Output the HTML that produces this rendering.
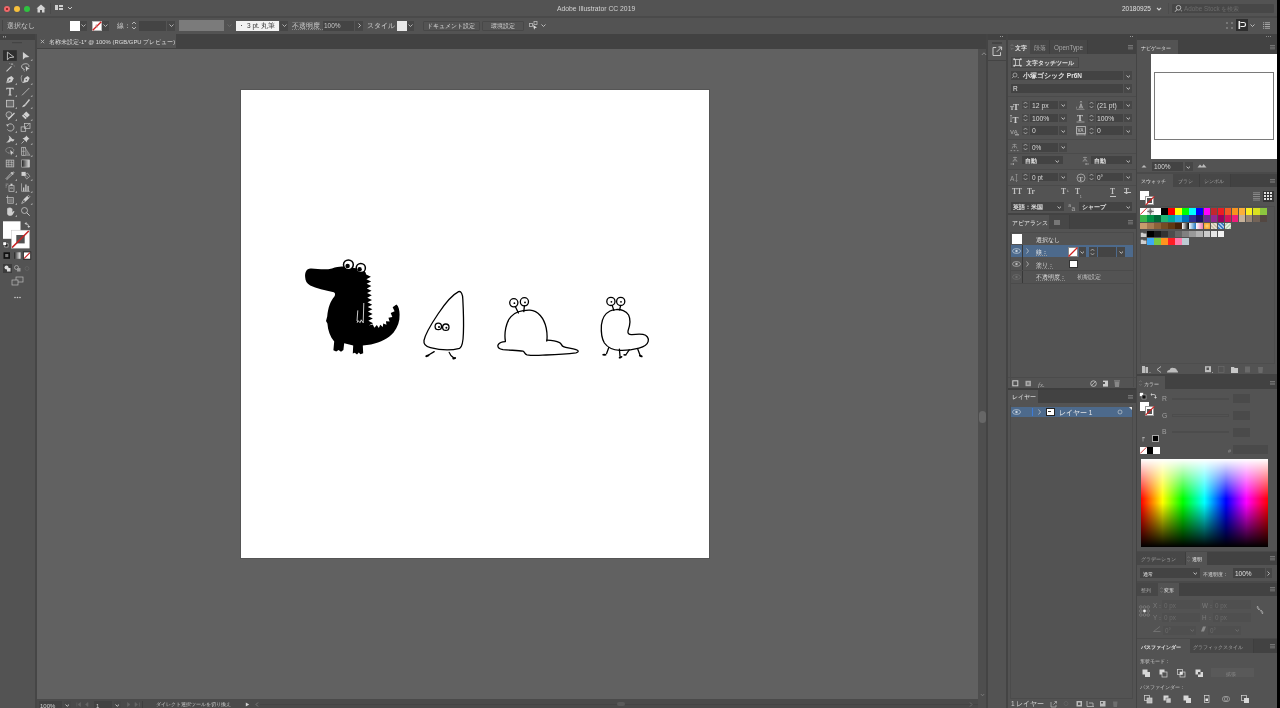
<!DOCTYPE html>
<html><head><meta charset="utf-8">
<style>
*{margin:0;padding:0;box-sizing:border-box}
html,body{width:1280px;height:708px;overflow:hidden;background:#535353;font-family:"Liberation Sans",sans-serif;color:#d6d6d6}
.a{position:absolute}
.t{position:absolute;font-size:6px;line-height:8px;white-space:nowrap;color:#d8d8d8;-webkit-font-smoothing:antialiased;will-change:transform}
</style></head><body>
<!-- title bar -->
<div class="a" style="left:0;top:0;width:1280px;height:17px;background:#535353"></div>
<div class="a" style="left:0;top:16px;width:1280px;height:2px;background:#4a4a4a"></div>
<!-- control bar -->
<div class="a" style="left:0;top:18px;width:1280px;height:16px;background:#535353"></div>
<!-- left toolbar -->
<div class="a" style="left:0;top:34px;width:36px;height:674px;background:#535353"></div>
<div class="a" style="left:0;top:34px;width:36px;height:6px;background:#424242"></div>
<div class="a" style="left:35px;top:34px;width:2px;height:674px;background:#464646"></div>
<!-- tab bar -->
<div class="a" style="left:37px;top:34px;width:950px;height:15px;background:#424242"></div>
<div class="a" style="left:37px;top:34px;width:139px;height:14px;background:#535353"></div>
<!-- canvas -->
<div class="a" style="left:37px;top:49px;width:941px;height:650px;background:#616161"></div>
<!-- artboard -->
<div class="a" style="left:241px;top:90px;width:468px;height:468px;background:#fff;box-shadow:0 0 0 1px rgba(0,0,0,0.12)"></div>
<!-- ART --><svg class="a" style="left:0;top:0" width="980" height="708" viewBox="0 0 980 708">
<g fill="#000">
<path d="M305.2 277.5 C304.6 272 306.4 268.8 310.6 268.4 C316.8 268.2 324 270.6 332 268.4 C337 267 341 266.2 344 266.8 L360 268.8 C363.6 269.4 365.6 271.4 366.2 274.5 L366.2 274.5 L370.91 276.82 L366.42 279.14 L371.13 281.45 L366.64 283.77 L371.35 286.09 L366.85 288.41 L371.56 290.73 L367.07 293.05 L371.78 295.36 L367.29 297.68 L372.0 300.0 L367.51 302.32 L372.22 304.64 L367.73 306.95 L372.44 309.27 L367.95 311.59 L372.65 313.91 L368.16 316.23 L372.87 318.55 L368.38 320.86 L373.09 323.18 L368.6 325.5 L372.77 324.39 L374.4 327.8 L376.78 325.01 L378.87 327.93 L380.2 324.66 L382.89 326.91 L383.18 323.4 L386.48 324.73 L385.92 321.14 L389.62 321.38 L388.45 317.73 L392.32 316.88 L390.72 313.08 L394.58 311.22 L392.65 307.18 L396.4 304.4 C398.6 306 399.6 310 399.6 314.6 C399.8 321.4 397.8 327.4 393.6 332.4 C388.8 338.2 380.8 342.2 371 344.4 L362.8 345.4 L363.2 353.2 L360.4 354.2 L358.8 352.4 L357 354.4 L354.8 352.8 L352.8 353.6 L353.2 345.6 L344.2 343.2 L343.4 350 L341 351.8 L338.6 350 L336.2 351.4 L333.4 350.2 L334.2 341.6 C330.2 336.6 327.8 330.2 327.4 323.4 L326 321 L327.2 316.6 C328 307.4 330.6 300.6 334.4 296.4 C335.4 294.6 335.4 293 333.8 292.2 C325 290.4 316.2 288 310.2 285.4 C306.6 283.6 305.4 280.8 305.2 277.5 Z"/>
</g>
<circle cx="348.4" cy="264.8" r="4.9" fill="#fff" stroke="#000" stroke-width="1.5"/>
<circle cx="347.6" cy="266" r="2.2" fill="#000"/>
<circle cx="360.8" cy="268" r="4.6" fill="#fff" stroke="#000" stroke-width="1.5"/>
<circle cx="359.6" cy="269.2" r="2.2" fill="#000"/>
<path d="M363.8 303 L363.2 322.8 L361.2 319.8 L360.2 322.6 L357.8 320.6 L357.2 322.8 M357.8 310.4 L357 321" stroke="#fff" stroke-width="0.8" fill="none"/>
<g fill="none" stroke="#000" stroke-width="1.3" stroke-linecap="round" stroke-linejoin="round">
<!-- triangle -->
<path d="M458.6 291.6 C461.2 291 462.6 294 462.8 299 C463.4 310 463.8 322 463.4 333 C463.2 341 462.4 347 459.6 348.4 C452 350.4 440 350.2 430.4 347.6 C426.2 346.6 423.4 344.2 424 340.4 C425.6 333 430.6 325 438 314 C444.6 304 452.2 294.8 458.6 291.6 Z"/>
<circle cx="438.3" cy="326.4" r="3.2"/><circle cx="445.8" cy="327.2" r="3.2"/>
<path d="M434.2 351.6 L428.6 355"/><path d="M449.2 352.4 C450 354.6 451.6 356.6 453.4 357.6"/>
<!-- slug -->
<circle cx="513.8" cy="302.8" r="4.1"/><circle cx="524.4" cy="301.8" r="4.1"/>
<path d="M515.4 306.8 L518.4 313"/><path d="M524.4 305.8 L523.8 311.6"/>
<path d="M505.4 341.2 C504 333 506 322 511 316.6 C515.4 311.8 522 310 530 310.2 C538 310.6 544 318 546.2 328 C547.2 333 547.2 338 546.8 341"/>
<path d="M505.4 341.6 C502 341.6 499.4 342.4 498 345 C497.4 347.4 499 349 503 349.6 C510 350.4 518 350.2 523 351.2 C525 352 524.4 354.2 527 354.8 C533 355.8 540 355.2 546 355 C556 354.6 568 353.8 576 352.8 C579 352.2 579 350.4 576 349.6 C571 348.2 566 347.8 563.4 346.6 C561 345.6 562 343.8 559.6 342.6 C556 341 551 340.4 546.8 340.2"/>
<!-- caterpillar -->
<circle cx="610.9" cy="301.4" r="4.1"/><circle cx="620.7" cy="301.4" r="4.1"/>
<path d="M612.2 305.4 L613.8 310.4"/><path d="M620.6 305.6 L619.6 309.8"/>
<path d="M615.8 309.6 C621 309 626.4 311 628.6 315 C630.8 319.4 630.2 325 628 331 C627.6 333.6 628.8 334.8 632 334.6 C636 334.2 640 334 643 334.4 C647 335.2 649 338.2 648.2 341.4 C647.4 344.6 644 346.8 639 348.2 C632 350 626 350.6 620 350.4 C613 350 607.6 347.6 604.4 343 C601.4 338 601 331 601.4 325 C602.2 318 606 313 610 311 C611.6 310.2 613.6 309.8 615.8 309.6 Z"/>
<path d="M608.8 347.6 L606.6 353.4"/><path d="M619.4 349.2 L620 356"/><path d="M629.2 349.8 L626.4 354"/><path d="M637.8 349.2 L640 355"/>
</g>
<g fill="#000">
<circle cx="439" cy="327" r="1"/><circle cx="446.4" cy="327.8" r="1"/>
<circle cx="514.4" cy="303.2" r="0.9"/><circle cx="525" cy="302.4" r="0.9"/>
<circle cx="611.4" cy="301.8" r="0.9"/><circle cx="621" cy="301.8" r="0.9"/>
<ellipse cx="427.4" cy="355.8" rx="2.2" ry="1.1" transform="rotate(-20 427.4 355.8)"/>
<ellipse cx="454.2" cy="358.2" rx="2" ry="1.1" transform="rotate(-15 454.2 358.2)"/>
<ellipse cx="604.4" cy="354.8" rx="2.2" ry="1" /><ellipse cx="620.6" cy="357.2" rx="2" ry="1" transform="rotate(-20 620.6 357.2)"/>
<ellipse cx="625" cy="354.8" rx="1.8" ry="0.9"/><ellipse cx="640.8" cy="356" rx="2" ry="1" transform="rotate(20 640.8 356)"/>
</g>
</svg>
<!-- /ART -->
<!-- v scrollbar -->
<div class="a" style="left:978px;top:49px;width:8px;height:659px;background:#4e4e4e"></div>
<div class="a" style="left:986px;top:34px;width:2px;height:674px;background:#444444"></div>
<!-- status bar -->
<div class="a" style="left:37px;top:699px;width:941px;height:9px;background:#4a4a4a"></div>
<!-- dock -->
<div class="a" style="left:988px;top:34px;width:18px;height:674px;background:#535353"></div>
<div class="a" style="left:988px;top:34px;width:18px;height:6px;background:#424242"></div>
<div class="a" style="left:1006px;top:34px;width:2px;height:674px;background:#444444"></div>
<!-- col1 -->
<div class="a" style="left:1008px;top:34px;width:128px;height:674px;background:#535353"></div>
<div class="a" style="left:1008px;top:34px;width:128px;height:6px;background:#424242"></div>
<div class="a" style="left:1136px;top:34px;width:1px;height:674px;background:#444444"></div>
<!-- col2 -->
<div class="a" style="left:1137px;top:34px;width:140px;height:674px;background:#535353"></div>
<div class="a" style="left:1137px;top:34px;width:140px;height:6px;background:#424242"></div>
<div class="a" style="left:1277px;top:0;width:3px;height:708px;background:#000"></div>

<!-- TITLE DETAILS -->
<div class="a" style="left:4px;top:6px;width:6px;height:6px;border-radius:50%;background:#f0686a"></div>
<div class="a" style="left:6px;top:8px;width:2px;height:2px;border-radius:50%;background:#8a1010"></div>
<div class="a" style="left:14px;top:6px;width:6px;height:6px;border-radius:50%;background:#f6c03c"></div>
<div class="a" style="left:24px;top:6px;width:6px;height:6px;border-radius:50%;background:#2fc340"></div>
<svg class="a" style="left:36px;top:4px" width="10" height="9" viewBox="0 0 10 9"><path d="M5 0.5 L9.5 4.5 L8.5 4.5 L8.5 8.5 L6 8.5 L6 6 L4 6 L4 8.5 L1.5 8.5 L1.5 4.5 L0.5 4.5 Z" fill="#d4d4d4"/></svg>
<div class="a" style="left:50px;top:3px;width:1px;height:11px;background:#4a4a4a"></div>
<div class="a" style="left:55px;top:5px;width:3px;height:5px;background:#d0d0d0"></div>
<div class="a" style="left:59px;top:5px;width:4px;height:2px;background:#d0d0d0"></div>
<div class="a" style="left:59px;top:8px;width:4px;height:2px;background:#d0d0d0"></div>
<svg class="a" style="left:67px;top:6px" width="6" height="4" viewBox="0 0 6 4"><path d="M1 1 L3 3 L5 1" stroke="#c8c8c8" stroke-width="1" fill="none"/></svg>
<div class="t" style="left:557px;top:4px;font-size:6.8px;line-height:9px;color:#d2d2d2">Adobe Illustrator CC 2019</div>
<div class="t" style="left:1122px;top:4px;font-size:6.5px;line-height:9px;color:#e0e0e0">20180925</div>
<svg class="a" style="left:1156px;top:7px" width="6" height="4" viewBox="0 0 6 4"><path d="M1 1 L3 3 L5 1" stroke="#d0d0d0" stroke-width="1.1" fill="none"/></svg>
<div class="a" style="left:1168px;top:3px;width:1px;height:11px;background:#4c4c4c"></div>
<div class="a" style="left:1172px;top:4px;width:102px;height:9px;background:#474747;border-radius:1px"></div>
<svg class="a" style="left:1174px;top:4px" width="9" height="9" viewBox="0 0 9 9"><circle cx="4.5" cy="3.8" r="2.3" stroke="#c0c0c0" stroke-width="0.9" fill="none"/><path d="M3 5.5 L1 7.8" stroke="#c0c0c0" stroke-width="1"/><path d="M6.5 6.5 L8.3 6.5 L7.4 7.6Z" fill="#c0c0c0"/></svg>
<div class="t" style="left:1184px;top:4px;font-size:6.3px;line-height:9px;color:#6c6c6c">Adobe Stock を検索</div>
<!-- CONTROL BAR DETAILS -->
<div class="a" style="left:2px;top:20px;width:1px;height:11px;background:#464646"></div>
<div class="t" style="left:7px;top:22px;font-size:6.5px;color:#cfcfcf">選択なし</div>
<div class="a" style="left:70px;top:20.5px;width:10px;height:10px;background:#fff"></div>
<div class="a" style="left:80px;top:20.5px;width:7px;height:10px;background:#474747"></div>
<svg class="a" style="left:81px;top:24px" width="5" height="3" viewBox="0 0 5 3"><path d="M0.5 0.5 L2.5 2.5 L4.5 0.5" stroke="#bdbdbd" stroke-width="0.9" fill="none"/></svg>
<div class="a" style="left:92px;top:20.5px;width:10px;height:10px;background:#fff;border:1px solid #bbb"></div>
<svg class="a" style="left:92px;top:20.5px" width="10" height="10" viewBox="0 0 10 10"><path d="M9.3 0.7 L0.7 9.3" stroke="#d02020" stroke-width="1.3"/><path d="M3 4 L6 6 M4.5 3 L5 7" stroke="#b88" stroke-width="0.5"/></svg>
<div class="a" style="left:102px;top:20.5px;width:7px;height:10px;background:#474747"></div>
<svg class="a" style="left:103px;top:24px" width="5" height="3" viewBox="0 0 5 3"><path d="M0.5 0.5 L2.5 2.5 L4.5 0.5" stroke="#bdbdbd" stroke-width="0.9" fill="none"/></svg>
<div class="t" style="left:117px;top:22px;font-size:6.5px;color:#cfcfcf">線：</div>
<svg class="a" style="left:131px;top:21px" width="6" height="9" viewBox="0 0 6 9"><path d="M1 3 L3 1 L5 3 M1 6 L3 8 L5 6" stroke="#c0c0c0" stroke-width="0.9" fill="none"/></svg>
<div class="a" style="left:139px;top:20.5px;width:27px;height:10px;background:#444"></div>
<div class="a" style="left:167px;top:20.5px;width:8px;height:10px;background:#474747"></div>
<svg class="a" style="left:168.5px;top:24px" width="5" height="3" viewBox="0 0 5 3"><path d="M0.5 0.5 L2.5 2.5 L4.5 0.5" stroke="#bdbdbd" stroke-width="0.9" fill="none"/></svg>
<div class="a" style="left:178.5px;top:20px;width:45px;height:10.5px;background:#7b7b7b"></div>
<svg class="a" style="left:226.5px;top:24px" width="5" height="3" viewBox="0 0 5 3"><path d="M0.5 0.5 L2.5 2.5 L4.5 0.5" stroke="#6e6e6e" stroke-width="0.9" fill="none"/></svg>
<div class="a" style="left:236px;top:20.5px;width:43px;height:10px;background:#f2f2f2"></div>
<div class="a" style="left:241px;top:25px;width:1.2px;height:1.2px;background:#222;border-radius:50%"></div>
<div class="t" style="left:247px;top:22px;font-size:6.5px;color:#333">3 pt. 丸筆</div>
<div class="a" style="left:280px;top:20.5px;width:8px;height:10px;background:#474747"></div>
<svg class="a" style="left:281.5px;top:24px" width="5" height="3" viewBox="0 0 5 3"><path d="M0.5 0.5 L2.5 2.5 L4.5 0.5" stroke="#bdbdbd" stroke-width="0.9" fill="none"/></svg>
<div class="t" style="left:292px;top:22px;font-size:6.5px;color:#cfcfcf;text-decoration:underline dotted #888">不透明度：</div>
<div class="a" style="left:323px;top:20.5px;width:31px;height:10px;background:#444"></div>
<div class="t" style="left:324px;top:22px;font-size:6.5px;color:#c8c8c8">100%</div>
<div class="a" style="left:355px;top:20.5px;width:8px;height:10px;background:#474747"></div>
<svg class="a" style="left:357.5px;top:23px" width="3" height="5" viewBox="0 0 3 5"><path d="M0.5 0.5 L2.5 2.5 L0.5 4.5" stroke="#c8c8c8" stroke-width="0.9" fill="none"/></svg>
<div class="t" style="left:367px;top:22px;font-size:6.5px;color:#cfcfcf">スタイル：</div>
<div class="a" style="left:397px;top:20.5px;width:10px;height:10px;background:#e8e8e8"></div>
<div class="a" style="left:407px;top:20.5px;width:7px;height:10px;background:#474747"></div>
<svg class="a" style="left:408px;top:24px" width="5" height="3" viewBox="0 0 5 3"><path d="M0.5 0.5 L2.5 2.5 L4.5 0.5" stroke="#bdbdbd" stroke-width="0.9" fill="none"/></svg>
<div class="a" style="left:422.5px;top:20.5px;width:57px;height:10px;border:1px solid #484848;border-radius:1px"></div>
<div class="t" style="left:427px;top:22px;font-size:6.3px;color:#d8d8d8">ドキュメント設定</div>
<div class="a" style="left:482px;top:20.5px;width:41.5px;height:10px;border:1px solid #484848;border-radius:1px"></div>
<div class="t" style="left:491px;top:22px;font-size:6.3px;color:#d8d8d8">環境設定</div>
<svg class="a" style="left:529px;top:21px" width="9" height="9" viewBox="0 0 9 9"><rect x="0.5" y="2.5" width="3" height="3" stroke="#bbb" stroke-width="0.8" fill="none"/><rect x="5" y="0.5" width="3" height="3" stroke="#bbb" stroke-width="0.8" fill="none"/><path d="M4 4 L8 6.5 L6 7 L5.2 8.8Z" fill="#ddd"/></svg>
<svg class="a" style="left:540.5px;top:24px" width="5" height="3" viewBox="0 0 5 3"><path d="M0.5 0.5 L2.5 2.5 L4.5 0.5" stroke="#c8c8c8" stroke-width="0.9" fill="none"/></svg>
<svg class="a" style="left:1226px;top:22px" width="7" height="7" viewBox="0 0 7 7"><g fill="#777"><rect x="0" y="0" width="2" height="2"/><rect x="5" y="0" width="2" height="2"/><rect x="0" y="5" width="2" height="2"/><rect x="5" y="5" width="2" height="2"/></g></svg>
<div class="a" style="left:1236px;top:19px;width:12px;height:12px;background:#2e2e2e"></div>
<svg class="a" style="left:1237px;top:20px" width="10" height="10" viewBox="0 0 10 10"><rect x="1.5" y="1" width="1.6" height="8" fill="#eee"/><path d="M3.5 2.5 L7 2.5 Q8.5 2.5 8.5 4.5 Q8.5 6.5 7 6.5 L3.5 6.5" stroke="#eee" stroke-width="1.2" fill="none"/></svg>
<svg class="a" style="left:1250px;top:24px" width="5" height="3" viewBox="0 0 5 3"><path d="M0.5 0.5 L2.5 2.5 L4.5 0.5" stroke="#c8c8c8" stroke-width="0.9" fill="none"/></svg>
<svg class="a" style="left:1263px;top:22px" width="7" height="7" viewBox="0 0 7 7"><g fill="#b8b8b8"><rect x="0" y="0.4" width="1.2" height="0.8"/><rect x="0" y="2.2" width="1.2" height="0.8"/><rect x="0" y="4" width="1.2" height="0.8"/><rect x="0" y="5.8" width="1.2" height="0.8"/><rect x="2" y="0.4" width="5" height="0.8"/><rect x="2" y="2.2" width="5" height="0.8"/><rect x="2" y="4" width="5" height="0.8"/><rect x="2" y="5.8" width="5" height="0.8"/></g></svg>
<!-- TOOLBAR --><svg class="a" style="left:0;top:0" width="36" height="310" viewBox="0 0 36 310">
<rect x="3" y="36" width="1" height="1.5" fill="#999"/><rect x="5" y="36" width="1" height="1.5" fill="#999"/>
<rect x="12" y="42" width="10" height="1.2" fill="#444"/>
<rect x="3" y="50.2" width="13.8" height="10.7" fill="#2f2f2f"/>
<g transform="translate(5,50.5)"><path d="M2.4 1.6 L2.4 9.3 L4.7 7.1 L8.9 6.6 Z" fill="none" stroke="#c9c9c9" stroke-width="0.9"/></g>
<g transform="translate(20.5,50.5)"><path d="M2.4 1.6 L2.4 9.3 L4.7 7.1 L8.9 6.6 Z" fill="#d0d0d0"/></g>
<path d="M32.4 58.9 L32.4 60.7 L30.599999999999998 60.7 Z" fill="#bdbdbd"/>
<g transform="translate(5,62.5)"><path d="M1.5 8.8 L6.5 3.8" stroke="#c9c9c9" stroke-width="1.1"/><path d="M7 1 L7 2.4 M5.8 1.6 L8.2 1.6 M8.8 3 L9.6 3.6 M4.5 0.8 L5 1.4" stroke="#c9c9c9" stroke-width="0.6"/></g>
<g transform="translate(20.5,62.5)"><path d="M4 7 Q0.5 6 1 3.5 Q2 1 5.5 1.2 Q9 1.6 8.4 4.4" fill="none" stroke="#c9c9c9" stroke-width="0.8"/><path d="M5 3.5 L9.2 6.5 L7 6.8 L5.8 9 Z" fill="#d0d0d0"/><path d="M3.5 6.5 Q3 8 4 9" stroke="#c9c9c9" stroke-width="0.6" fill="none"/></g>
<g transform="translate(5,74.5)"><path d="M6.5 1.5 L8.8 3.8 L6.8 7.5 L1.2 8.8 L2.6 3.4 Z" fill="#cfcfcf"/><path d="M1.5 8.5 L4.5 5.5" stroke="#535353" stroke-width="0.6"/><circle cx="4.8" cy="5.2" r="0.8" fill="#535353"/></g>
<path d="M17.0 82.9 L17.0 84.7 L15.200000000000001 84.7 Z" fill="#bdbdbd"/>
<g transform="translate(20.5,74.5)"><path d="M7 1.5 L9.2 3.6 L7.4 7.2 L2.6 8.6 L3.8 3.8 Z" fill="#cfcfcf"/><path d="M1.6 0.6 Q0 3 1 6 Q1.8 9 3.4 8" stroke="#c9c9c9" stroke-width="0.6" fill="none"/><circle cx="5.8" cy="5.2" r="0.8" fill="#535353"/></g>
<path d="M32.4 82.9 L32.4 84.7 L30.599999999999998 84.7 Z" fill="#bdbdbd"/>
<g transform="translate(5,86.5)"><path d="M1.3 1.3 L8.7 1.3 L8.7 3 L8 3 L7.6 2.2 L5.7 2.2 L5.7 8 L6.5 8.3 L6.5 8.9 L3.5 8.9 L3.5 8.3 L4.3 8 L4.3 2.2 L2.4 2.2 L2 3 L1.3 3 Z" fill="#d2d2d2"/></g>
<path d="M17.0 94.9 L17.0 96.7 L15.200000000000001 96.7 Z" fill="#bdbdbd"/>
<g transform="translate(20.5,86.5)"><path d="M1.5 8.8 L8.8 1.5" stroke="#c9c9c9" stroke-width="0.8"/></g>
<path d="M32.4 94.9 L32.4 96.7 L30.599999999999998 96.7 Z" fill="#bdbdbd"/>
<g transform="translate(5,98.5)"><rect x="1.5" y="1.8" width="7.2" height="6.6" fill="#6a6a6a" stroke="#c9c9c9" stroke-width="0.8"/></g>
<path d="M17.0 106.9 L17.0 108.7 L15.200000000000001 108.7 Z" fill="#bdbdbd"/>
<g transform="translate(20.5,98.5)"><path d="M9 1 L5 6" stroke="#c9c9c9" stroke-width="1.4"/><path d="M4.6 5.4 Q2.4 6 1.5 8.8 Q4.6 8.6 5.6 6.6 Z" fill="#d0d0d0"/></g>
<path d="M32.4 106.9 L32.4 108.7 L30.599999999999998 108.7 Z" fill="#bdbdbd"/>
<g transform="translate(5,110.5)"><circle cx="4" cy="4.2" r="3" fill="#5d5d5d" stroke="#c9c9c9" stroke-width="0.7"/><path d="M3 9 L9.5 2.5" stroke="#d0d0d0" stroke-width="1.3"/></g>
<path d="M17.0 118.9 L17.0 120.7 L15.200000000000001 120.7 Z" fill="#bdbdbd"/>
<g transform="translate(20.5,110.5)"><path d="M5.8 1 L9.3 4.4 L5 8.8 L1.4 5.3 Z" fill="#d0d0d0"/><path d="M2.8 3.9 L6.6 7.4" stroke="#535353" stroke-width="0.6"/></g>
<path d="M32.4 118.9 L32.4 120.7 L30.599999999999998 120.7 Z" fill="#bdbdbd"/>
<g transform="translate(5,122.5)"><path d="M2.2 3.2 A3.6 3.6 0 1 1 2.4 7" fill="none" stroke="#c9c9c9" stroke-width="0.8"/><path d="M1 2 L3.2 2 L3.2 4.4 Z" fill="#d0d0d0"/></g>
<path d="M17.0 130.9 L17.0 132.7 L15.200000000000001 132.7 Z" fill="#bdbdbd"/>
<g transform="translate(20.5,122.5)"><rect x="4" y="1" width="5.5" height="5" fill="none" stroke="#c9c9c9" stroke-width="0.7"/><rect x="0.6" y="4.4" width="4.6" height="4.4" fill="none" stroke="#c9c9c9" stroke-width="0.7"/><path d="M6 4 L8.6 1.6" stroke="#c9c9c9" stroke-width="0.6"/></g>
<path d="M32.4 130.9 L32.4 132.7 L30.599999999999998 132.7 Z" fill="#bdbdbd"/>
<g transform="translate(5,134.5)"><path d="M1 8 Q3 7 4 5 Q5 2 3 1.2 Q5 1 6 3 Q7 5 9.5 5 Q8.5 8 6 6.6 Q4.5 8.5 1 8 Z" fill="#c8c8c8"/></g>
<path d="M17.0 142.9 L17.0 144.7 L15.200000000000001 144.7 Z" fill="#bdbdbd"/>
<g transform="translate(20.5,134.5)"><path d="M5.6 1 L9 4.4 L7.8 4.8 L6.4 6.6 L6.6 8 L2 3.4 L3.4 3.6 L5.2 2.2 Z" fill="#d0d0d0"/><path d="M3.8 6.2 L1 9" stroke="#c9c9c9" stroke-width="0.8"/></g>
<path d="M32.4 142.9 L32.4 144.7 L30.599999999999998 144.7 Z" fill="#bdbdbd"/>
<g transform="translate(5,146.5)"><ellipse cx="4.8" cy="3.8" rx="4" ry="2.8" fill="none" stroke="#c9c9c9" stroke-width="0.6" stroke-dasharray="1 0.5"/><path d="M5.2 3.4 L9 6.8 L7 7 L6 9 Z" fill="#d0d0d0"/></g>
<path d="M17.0 154.9 L17.0 156.7 L15.200000000000001 156.7 Z" fill="#bdbdbd"/>
<g transform="translate(20.5,146.5)"><rect x="1.2" y="0.8" width="3.6" height="8" fill="none" stroke="#c9c9c9" stroke-width="0.7"/><path d="M1.2 4.8 L4.8 4.8 M3 0.8 L3 8.8" stroke="#c9c9c9" stroke-width="0.5"/><path d="M4.8 1.5 L9.6 8.8 L4.8 8.8" fill="#777" stroke="#c9c9c9" stroke-width="0.4"/></g>
<path d="M32.4 154.9 L32.4 156.7 L30.599999999999998 156.7 Z" fill="#bdbdbd"/>
<g transform="translate(5,158.5)"><rect x="1.2" y="1.6" width="7.6" height="6.8" fill="#5e5e5e" stroke="#c9c9c9" stroke-width="0.7"/><path d="M1.2 4 Q4 3 8.8 4.4 M1.2 6.2 Q5 5.4 8.8 6.6 M3.8 1.6 Q3.2 5 4 8.4 M6.4 1.6 Q7 5 6.2 8.4" stroke="#c9c9c9" stroke-width="0.5" fill="none"/></g>
<g transform="translate(20.5,158.5)"><defs><linearGradient id="gg" x1="0" x2="1"><stop offset="0" stop-color="#222"/><stop offset="1" stop-color="#e0e0e0"/></linearGradient></defs><rect x="1.2" y="1.4" width="7.8" height="7.2" fill="url(#gg)" stroke="#c9c9c9" stroke-width="0.6"/></g>
<g transform="translate(5,170.5)"><path d="M8.6 1.4 L9 1.8 L7 4.2 L1.8 9 L1 8.2 L5.8 3 Z" fill="none" stroke="#c9c9c9" stroke-width="0.8"/><path d="M6 1.8 L8.2 4" stroke="#c9c9c9" stroke-width="1.2"/></g>
<path d="M17.0 178.9 L17.0 180.7 L15.200000000000001 180.7 Z" fill="#bdbdbd"/>
<g transform="translate(20.5,170.5)"><rect x="1" y="1.4" width="4.2" height="4" fill="#d0d0d0"/><path d="M3.8 4.8 L7 2.6 L9.4 5.8 L6.2 8.6 Z" fill="none" stroke="#c9c9c9" stroke-width="0.6"/><path d="M4.5 4 L7.8 7" stroke="#c9c9c9" stroke-width="0.5"/></g>
<path d="M32.4 178.9 L32.4 180.7 L30.599999999999998 180.7 Z" fill="#bdbdbd"/>
<g transform="translate(5,182.5)"><rect x="4" y="3.2" width="5" height="5.6" fill="none" stroke="#c9c9c9" stroke-width="0.7"/><rect x="5.5" y="1.2" width="2" height="2" fill="#d0d0d0"/><path d="M5.2 5.6 Q6.5 4.6 7.8 5.6 Q6.5 6.8 5.2 5.6" fill="none" stroke="#c9c9c9" stroke-width="0.5"/><path d="M0.6 1.6 L3.4 1.6 M0.6 3.2 L2 3.2 M0.6 4.6 L1.6 4.6" stroke="#c9c9c9" stroke-width="0.5"/></g>
<path d="M17.0 190.9 L17.0 192.7 L15.200000000000001 192.7 Z" fill="#bdbdbd"/>
<g transform="translate(20.5,182.5)"><path d="M1 0.8 L1 8.8 L9.4 8.8" fill="none" stroke="#c9c9c9" stroke-width="0.6"/><rect x="2.6" y="5" width="1.2" height="3.8" fill="#d0d0d0"/><rect x="4.8" y="2" width="1.2" height="6.8" fill="#d0d0d0"/><rect x="7" y="3.4" width="1.2" height="5.4" fill="#d0d0d0"/></g>
<path d="M32.4 190.9 L32.4 192.7 L30.599999999999998 192.7 Z" fill="#bdbdbd"/>
<g transform="translate(5,194.5)"><path d="M1 3 L8.4 3 L8.4 8.8 L2.6 8.8 L2.6 1" fill="none" stroke="#c9c9c9" stroke-width="0.7"/><rect x="3.2" y="4" width="4.6" height="4.2" fill="#7a7a7a"/></g>
<path d="M17.0 202.9 L17.0 204.7 L15.200000000000001 204.7 Z" fill="#bdbdbd"/>
<g transform="translate(20.5,194.5)"><path d="M8 0.8 L9.4 2.2 L4 7.6 L1.2 9 L2.4 6.2 Z" fill="none" stroke="#c9c9c9" stroke-width="0.7"/><path d="M6.6 1.6 L8.6 3.6 L5 7 L3 5 Z" fill="#cfcfcf"/></g>
<path d="M32.4 202.9 L32.4 204.7 L30.599999999999998 204.7 Z" fill="#bdbdbd"/>
<g transform="translate(5,206.5)"><path d="M2.2 4 L2.2 2 Q2.6 1.2 3.2 2 L3.4 1.2 Q4 0.6 4.6 1.2 L5 1 Q5.6 0.8 6 1.4 L6.4 1.8 Q7.2 1.8 7.4 2.6 L7.4 6 L8.6 4.6 Q9.4 4.4 9.4 5.2 L7.4 8.4 Q6.8 9.2 5.8 9.2 L4 9.2 Q2.6 9 2.2 7.6 Z" fill="#cfcfcf"/></g>
<path d="M17.0 214.9 L17.0 216.7 L15.200000000000001 216.7 Z" fill="#bdbdbd"/>
<g transform="translate(20.5,206.5)"><circle cx="4" cy="4" r="3" fill="none" stroke="#c9c9c9" stroke-width="0.8"/><path d="M6.2 6.2 L9.2 9.2" stroke="#c9c9c9" stroke-width="1"/></g>
<rect x="3" y="221.3" width="17.5" height="17.5" fill="#fff"/>
<rect x="11.5" y="230.2" width="18" height="18" fill="#fff"/>
<rect x="16.3" y="235" width="8.4" height="8.4" fill="#535353"/>
<path d="M29 230.8 L12 247.6" stroke="#c82424" stroke-width="1.5"/>
<rect x="11.5" y="230.2" width="18" height="18" fill="none" stroke="#bcbcbc" stroke-width="0.5"/>
<path d="M25.5 223.5 Q28.8 223.5 28.8 227" fill="none" stroke="#cfcfcf" stroke-width="0.8"/><path d="M24.5 223.5 L26.5 222 L26.5 225Z M27.3 226 L30.3 226 L28.8 228Z" fill="#cfcfcf"/>
<rect x="4.8" y="243.8" width="3.2" height="3.2" fill="#111" stroke="#ddd" stroke-width="0.6"/><rect x="3" y="242" width="3.2" height="3.2" fill="#fff" stroke="#333" stroke-width="0.4"/>
<rect x="3.5" y="252.3" width="6.5" height="6.5" fill="#111"/><rect x="5.2" y="254" width="3.1" height="3.1" fill="#777"/>
<defs><linearGradient id="g2" x1="0" x2="1"><stop offset="0" stop-color="#222"/><stop offset="1" stop-color="#eee"/></linearGradient></defs><rect x="14" y="252.3" width="6.5" height="6.5" fill="url(#g2)"/>
<rect x="23.8" y="252.3" width="6.5" height="6.5" fill="#fff"/><path d="M30 252.6 L24 258.6" stroke="#c82424" stroke-width="1.2"/><rect x="23.3" y="251.8" width="7.5" height="7.5" fill="none" stroke="#2c2c2c" stroke-width="0.8"/>
<rect x="3" y="264" width="9" height="9" fill="#3c3c3c"/><circle cx="6.5" cy="267.5" r="2" fill="#ddd"/><rect x="7" y="268" width="3.5" height="3.5" fill="#ddd"/>
<circle cx="16.5" cy="267.5" r="2" fill="none" stroke="#bbb" stroke-width="0.7"/><rect x="17" y="268" width="3.5" height="3.5" fill="#999"/>
<circle cx="27" cy="268.5" r="2" fill="none" stroke="#6a6a6a" stroke-width="0.6"/>
<rect x="16" y="277" width="7" height="5" fill="#555" stroke="#bbb" stroke-width="0.7"/><rect x="12" y="280" width="6" height="5" fill="#555" stroke="#bbb" stroke-width="0.7"/>
<circle cx="15" cy="297.5" r="0.8" fill="#ccc"/><circle cx="17.5" cy="297.5" r="0.8" fill="#ccc"/><circle cx="20" cy="297.5" r="0.8" fill="#ccc"/>
</svg><!-- /TOOLBAR -->
<!-- PANELS1 --><div class="a" style="left:1000px;top:35.5px;width:1px;height:1.5px;background:#999;"></div>
<div class="a" style="left:1002px;top:35.5px;width:1px;height:1.5px;background:#999;"></div>
<div class="a" style="left:1130px;top:35.5px;width:1px;height:1.5px;background:#999;"></div>
<div class="a" style="left:1132px;top:35.5px;width:1px;height:1.5px;background:#999;"></div>
<div class="a" style="left:1266px;top:35.5px;width:1px;height:1.5px;background:#888;"></div>
<div class="a" style="left:1268px;top:35.5px;width:1px;height:1.5px;background:#888;"></div>
<div class="a" style="left:1270px;top:35.5px;width:1px;height:1.5px;background:#888;"></div>
<div class="a" style="left:988px;top:40px;width:18px;height:20px;background:#535353;"></div>
<div class="a" style="left:992px;top:42.3px;width:10px;height:1.4px;background:#444;"></div>
<div class="a" style="left:988px;top:60px;width:18px;height:1px;background:#444;"></div>
<svg class="a" style="left:992px;top:46px" width="11" height="11" viewBox="0 0 11 11"><path d="M4.2 1.5 L1 1.5 L1 9.5 L8.5 9.5 L8.5 6.2" stroke="#d4d4d4" stroke-width="0.9" fill="none"/><path d="M4.8 5.8 L9.6 1 M6.4 1 L9.6 1 L9.6 4.2" stroke="#d4d4d4" stroke-width="0.9" fill="none"/></svg>
<svg class="a" style="left:981px;top:52px" width="6" height="4" viewBox="0 0 6 4"><path d="M0.8 3 L3 0.8 L5.2 3" stroke="#999" stroke-width="0.8" fill="none"/></svg>
<div class="a" style="left:978.6px;top:410.5px;width:7px;height:12.3px;background:#676767;border-radius:3.5px"></div>
<svg class="a" style="left:980px;top:693px" width="5" height="4" viewBox="0 0 5 4"><path d="M0.8 1 L2.5 2.8 L4.2 1" stroke="#888" stroke-width="0.7" fill="none"/></svg>
<div class="a" style="left:1008px;top:40px;width:128px;height:14px;background:#424242;"></div>
<div class="a" style="left:1008px;top:40px;width:22px;height:14px;background:#535353;"></div>
<div class="a" style="left:1030px;top:40px;width:19px;height:14px;background:#474747;"></div>
<div class="a" style="left:1049px;top:40px;width:37.5px;height:14px;background:#474747;"></div>
<div class="a" style="left:1048.5px;top:40px;width:1px;height:14px;background:#3e3e3e;"></div>
<div class="a" style="left:1086.5px;top:40px;width:1px;height:14px;background:#3e3e3e;"></div>
<svg class="a" style="left:1010px;top:44px" width="4" height="6" viewBox="0 0 4 6"><path d="M0.6 2 L2 0.6 L3.4 2 M0.6 4 L2 5.4 L3.4 4" stroke="#8c8c8c" stroke-width="0.6" fill="none"/></svg>
<div class="t" style="left:1015px;top:43.6px;font-size:5.66px;color:#e8e8e8;font-weight:bold">文字</div>
<div class="t" style="left:1034px;top:43.6px;font-size:5.66px;color:#a8a8a8;">段落</div>
<div class="t" style="left:1054px;top:43.6px;font-size:6.3px;color:#a8a8a8;">OpenType</div>
<svg class="a" style="left:1127.5px;top:45.3px" width="5" height="4.5" viewBox="0 0 5 4.5"><rect x="0" y="0" width="5" height="0.9" fill="#7c7c7c"/><rect x="0" y="1.7" width="5" height="0.9" fill="#7c7c7c"/><rect x="0" y="3.4" width="5" height="0.9" fill="#7c7c7c"/></svg>
<div class="a" style="left:1010.5px;top:57px;width:68.5px;height:10.5px;background:#535353;border:1px solid #474747"></div>
<svg class="a" style="left:1013px;top:58px" width="9" height="9" viewBox="0 0 9 9"><path d="M1.5 1.5 L7.5 1.5 M1.5 7.5 L7.5 7.5 M2.5 1.5 L2.5 7.5 M6.5 1.5 L6.5 7.5" stroke="#d0d0d0" stroke-width="0.8"/><g fill="#d0d0d0"><circle cx="1.2" cy="1.2" r="1"/><circle cx="7.8" cy="1.2" r="1"/><circle cx="1.2" cy="7.8" r="1"/><circle cx="7.8" cy="7.8" r="1"/></g></svg>
<div class="t" style="left:1026px;top:58.6px;font-size:5.66px;color:#e0e0e0;font-weight:bold">文字タッチツール</div>
<div class="a" style="left:1010.5px;top:71px;width:112.5px;height:9px;background:#434343;"></div>
<div class="a" style="left:1123.5px;top:71px;width:8.5px;height:9px;background:#474747;"></div>
<svg class="a" style="left:1011px;top:72px" width="9" height="7" viewBox="0 0 9 7"><circle cx="4" cy="3" r="2" stroke="#bbb" stroke-width="0.7" fill="none"/><path d="M2.6 4.4 L1 6.2" stroke="#bbb" stroke-width="0.8"/><path d="M6.5 5.2 L8 5.2 L7.25 6.2Z" fill="#bbb"/></svg>
<div class="t" style="left:1023px;top:72.1px;font-size:6.5px;color:#e4e4e4;font-weight:bold">小塚ゴシック Pr6N</div>
<svg class="a" style="left:1125.9px;top:74.7px" width="4.5" height="3" viewBox="0 0 4.5 3"><path d="M0.5 0.6 L2.25 2.3 L4 0.6" stroke="#c4c4c4" stroke-width="1" fill="none"/></svg>
<div class="a" style="left:1010.5px;top:84px;width:112.5px;height:8.6px;background:#434343;"></div>
<div class="a" style="left:1123.5px;top:84px;width:8.5px;height:8.6px;background:#474747;"></div>
<div class="t" style="left:1013px;top:85.1px;font-size:6.5px;color:#e4e4e4;">R</div>
<svg class="a" style="left:1125.9px;top:87.2px" width="4.5" height="3" viewBox="0 0 4.5 3"><path d="M0.5 0.6 L2.25 2.3 L4 0.6" stroke="#c4c4c4" stroke-width="1" fill="none"/></svg>
<div class="a" style="left:1008px;top:95.5px;width:128px;height:1px;background:#4b4b4b;"></div>
<div class="a" style="left:1021.5px;top:100.7px;width:7.7px;height:8.7px;background:#4a4a4a;"></div>
<div class="a" style="left:1030.2px;top:100.7px;width:28px;height:8.7px;background:#434343;"></div>
<div class="a" style="left:1059px;top:100.7px;width:7.5px;height:8.7px;background:#474747;"></div>
<svg class="a" style="left:1023px;top:101.10000000000001px" width="5" height="8" viewBox="0 0 5 8"><path d="M0.8 2.8 L2.5 1 L4.2 2.8 M0.8 5.2 L2.5 7 L4.2 5.2" stroke="#bdbdbd" stroke-width="0.8" fill="none"/></svg>
<div class="t" style="left:1031.5px;top:101.7px;font-size:6.8px;color:#dadada;">12 px</div>
<svg class="a" style="left:1060.7px;top:103.9px" width="4.5" height="3" viewBox="0 0 4.5 3"><path d="M0.5 0.6 L2.25 2.3 L4 0.6" stroke="#c4c4c4" stroke-width="1" fill="none"/></svg>
<div class="a" style="left:1087.5px;top:100.7px;width:7.7px;height:8.7px;background:#4a4a4a;"></div>
<div class="a" style="left:1096px;top:100.7px;width:27.2px;height:8.7px;background:#434343;"></div>
<div class="a" style="left:1124px;top:100.7px;width:8px;height:8.7px;background:#474747;"></div>
<svg class="a" style="left:1089px;top:101.10000000000001px" width="5" height="8" viewBox="0 0 5 8"><path d="M0.8 2.8 L2.5 1 L4.2 2.8 M0.8 5.2 L2.5 7 L4.2 5.2" stroke="#bdbdbd" stroke-width="0.8" fill="none"/></svg>
<div class="t" style="left:1097px;top:101.7px;font-size:6.8px;color:#dadada;">(21 pt)</div>
<svg class="a" style="left:1125.9px;top:103.9px" width="4.5" height="3" viewBox="0 0 4.5 3"><path d="M0.5 0.6 L2.25 2.3 L4 0.6" stroke="#c4c4c4" stroke-width="1" fill="none"/></svg>
<div class="a" style="left:1021.5px;top:113.6px;width:7.7px;height:8.7px;background:#4a4a4a;"></div>
<div class="a" style="left:1030.2px;top:113.6px;width:28px;height:8.7px;background:#434343;"></div>
<div class="a" style="left:1059px;top:113.6px;width:7.5px;height:8.7px;background:#474747;"></div>
<svg class="a" style="left:1023px;top:114.0px" width="5" height="8" viewBox="0 0 5 8"><path d="M0.8 2.8 L2.5 1 L4.2 2.8 M0.8 5.2 L2.5 7 L4.2 5.2" stroke="#bdbdbd" stroke-width="0.8" fill="none"/></svg>
<div class="t" style="left:1031.5px;top:114.6px;font-size:6.8px;color:#dadada;">100%</div>
<svg class="a" style="left:1060.7px;top:116.8px" width="4.5" height="3" viewBox="0 0 4.5 3"><path d="M0.5 0.6 L2.25 2.3 L4 0.6" stroke="#c4c4c4" stroke-width="1" fill="none"/></svg>
<div class="a" style="left:1087.5px;top:113.6px;width:7.7px;height:8.7px;background:#4a4a4a;"></div>
<div class="a" style="left:1096px;top:113.6px;width:27.2px;height:8.7px;background:#434343;"></div>
<div class="a" style="left:1124px;top:113.6px;width:8px;height:8.7px;background:#474747;"></div>
<svg class="a" style="left:1089px;top:114.0px" width="5" height="8" viewBox="0 0 5 8"><path d="M0.8 2.8 L2.5 1 L4.2 2.8 M0.8 5.2 L2.5 7 L4.2 5.2" stroke="#bdbdbd" stroke-width="0.8" fill="none"/></svg>
<div class="t" style="left:1097px;top:114.6px;font-size:6.8px;color:#dadada;">100%</div>
<svg class="a" style="left:1125.9px;top:116.8px" width="4.5" height="3" viewBox="0 0 4.5 3"><path d="M0.5 0.6 L2.25 2.3 L4 0.6" stroke="#c4c4c4" stroke-width="1" fill="none"/></svg>
<div class="a" style="left:1021.5px;top:126.4px;width:7.7px;height:8.7px;background:#4a4a4a;"></div>
<div class="a" style="left:1030.2px;top:126.4px;width:28px;height:8.7px;background:#434343;"></div>
<div class="a" style="left:1059px;top:126.4px;width:7.5px;height:8.7px;background:#474747;"></div>
<svg class="a" style="left:1023px;top:126.80000000000001px" width="5" height="8" viewBox="0 0 5 8"><path d="M0.8 2.8 L2.5 1 L4.2 2.8 M0.8 5.2 L2.5 7 L4.2 5.2" stroke="#bdbdbd" stroke-width="0.8" fill="none"/></svg>
<div class="t" style="left:1031.5px;top:127.4px;font-size:6.8px;color:#dadada;">0</div>
<svg class="a" style="left:1060.7px;top:129.6px" width="4.5" height="3" viewBox="0 0 4.5 3"><path d="M0.5 0.6 L2.25 2.3 L4 0.6" stroke="#c4c4c4" stroke-width="1" fill="none"/></svg>
<div class="a" style="left:1087.5px;top:126.4px;width:7.7px;height:8.7px;background:#4a4a4a;"></div>
<div class="a" style="left:1096px;top:126.4px;width:27.2px;height:8.7px;background:#434343;"></div>
<div class="a" style="left:1124px;top:126.4px;width:8px;height:8.7px;background:#474747;"></div>
<svg class="a" style="left:1089px;top:126.80000000000001px" width="5" height="8" viewBox="0 0 5 8"><path d="M0.8 2.8 L2.5 1 L4.2 2.8 M0.8 5.2 L2.5 7 L4.2 5.2" stroke="#bdbdbd" stroke-width="0.8" fill="none"/></svg>
<div class="t" style="left:1097px;top:127.4px;font-size:6.8px;color:#dadada;">0</div>
<svg class="a" style="left:1125.9px;top:129.6px" width="4.5" height="3" viewBox="0 0 4.5 3"><path d="M0.5 0.6 L2.25 2.3 L4 0.6" stroke="#c4c4c4" stroke-width="1" fill="none"/></svg>
<svg class="a" style="left:1010px;top:101px" width="10" height="9" viewBox="0 0 10 9"><text x="0" y="8.5" font-family="Liberation Serif" font-weight="bold" font-size="6" fill="#cfcfcf">T</text><text x="3" y="8.5" font-family="Liberation Serif" font-weight="bold" font-size="9" fill="#cfcfcf">T</text></svg>
<svg class="a" style="left:1076px;top:100px" width="9" height="10" viewBox="0 0 9 10"><path d="M5 1 L5 9 M3.8 2.2 L5 1 L6.2 2.2" stroke="#a8a8a8" stroke-width="0.6" fill="none"/><text x="0" y="8.6" font-family="Liberation Sans" font-size="4" fill="#a8a8a8">t</text><path d="M3 8.6 L5 4 L7 8.6 M3.8 7 L6.2 7" stroke="#b8b8b8" stroke-width="0.7" fill="none"/><rect x="0.5" y="9.2" width="8" height="0.6" fill="#999"/></svg>
<svg class="a" style="left:1010px;top:113.5px" width="10" height="9" viewBox="0 0 10 9"><path d="M1 1 L1 8 M0 2 L1 1 L2 2 M0 7 L1 8 L2 7" stroke="#bbb" stroke-width="0.6" fill="none"/><text x="2.5" y="8.5" font-family="Liberation Serif" font-weight="bold" font-size="9" fill="#cfcfcf">T</text></svg>
<svg class="a" style="left:1076px;top:113px" width="9" height="10" viewBox="0 0 9 10"><text x="1" y="7.5" font-family="Liberation Serif" font-weight="bold" font-size="9" fill="#cfcfcf">T</text><path d="M0.5 9 L8.5 9" stroke="#bbb" stroke-width="0.7"/></svg>
<svg class="a" style="left:1010px;top:126.5px" width="10" height="9" viewBox="0 0 10 9"><text x="0" y="6.5" font-family="Liberation Sans" font-weight="bold" font-size="6" fill="#9a9a9a">VA</text><rect x="5" y="7" width="4" height="1.5" fill="#999"/></svg>
<svg class="a" style="left:1076px;top:126px" width="10" height="10" viewBox="0 0 10 10"><rect x="0.6" y="0.6" width="8.8" height="7" fill="none" stroke="#bdbdbd" stroke-width="0.9"/><text x="1.6" y="6.2" font-family="Liberation Sans" font-weight="bold" font-size="4.6" fill="#bdbdbd">VA</text><path d="M0.6 8.8 L9.4 8.8 M1 8 L1 9.6 M9 8 L9 9.6" stroke="#bbb" stroke-width="0.6"/></svg>
<div class="a" style="left:1008px;top:139px;width:128px;height:1px;background:#4b4b4b;"></div>
<div class="a" style="left:1021.5px;top:143px;width:7.7px;height:8.7px;background:#4a4a4a;"></div>
<div class="a" style="left:1030.2px;top:143px;width:28px;height:8.7px;background:#434343;"></div>
<div class="a" style="left:1059px;top:143px;width:7.5px;height:8.7px;background:#474747;"></div>
<svg class="a" style="left:1023px;top:143.4px" width="5" height="8" viewBox="0 0 5 8"><path d="M0.8 2.8 L2.5 1 L4.2 2.8 M0.8 5.2 L2.5 7 L4.2 5.2" stroke="#bdbdbd" stroke-width="0.8" fill="none"/></svg>
<div class="t" style="left:1031.5px;top:144.0px;font-size:6.5px;color:#dadada;">0%</div>
<svg class="a" style="left:1060.7px;top:146.2px" width="4.5" height="3" viewBox="0 0 4.5 3"><path d="M0.5 0.6 L2.25 2.3 L4 0.6" stroke="#c4c4c4" stroke-width="1" fill="none"/></svg>
<svg class="a" style="left:1010px;top:143px" width="9" height="9" viewBox="0 0 9 9"><path d="M2.5 1.5 L6.5 1.5 M4.5 0.8 L4.5 5 M2.2 5.5 Q2 3 4.5 3 Q7 3 6.8 5.5" stroke="#9a9a9a" stroke-width="0.7" fill="none"/><rect x="0.5" y="7.2" width="1.6" height="0.9" fill="#999"/><rect x="3.7" y="7.2" width="1.6" height="0.9" fill="#999"/><rect x="6.9" y="7.2" width="1.6" height="0.9" fill="#999"/></svg>
<div class="a" style="left:1008px;top:153px;width:128px;height:1px;background:#4b4b4b;"></div>
<div class="a" style="left:1021.5px;top:156.2px;width:41px;height:8.2px;background:#434343;"></div>
<div class="t" style="left:1025px;top:157.1px;font-size:5.66px;color:#e0e0e0;font-weight:bold">自動</div>
<svg class="a" style="left:1055.4px;top:159.7px" width="4.5" height="3" viewBox="0 0 4.5 3"><path d="M0.5 0.6 L2.25 2.3 L4 0.6" stroke="#c4c4c4" stroke-width="1" fill="none"/></svg>
<div class="a" style="left:1091px;top:156.2px;width:41px;height:8.2px;background:#434343;"></div>
<div class="t" style="left:1094px;top:157.1px;font-size:5.66px;color:#e0e0e0;font-weight:bold">自動</div>
<svg class="a" style="left:1125.9px;top:159.7px" width="4.5" height="3" viewBox="0 0 4.5 3"><path d="M0.5 0.6 L2.25 2.3 L4 0.6" stroke="#c4c4c4" stroke-width="1" fill="none"/></svg>
<svg class="a" style="left:1010px;top:156px" width="10" height="9" viewBox="0 0 10 9"><path d="M3 1.5 L7 1.5 M5 0.8 L5 5.5 M3 5.8 Q3 3.5 5 3.5 Q7 3.5 7 5.8" stroke="#9c9c9c" stroke-width="0.7" fill="none"/><path d="M0.5 8 L4 8 M3 7 L4 8 L3 9" stroke="#bbb" stroke-width="0.6" fill="none"/></svg>
<svg class="a" style="left:1080px;top:156px" width="10" height="9" viewBox="0 0 10 9"><path d="M3 1.5 L7 1.5 M5 0.8 L5 5.5 M3 5.8 Q3 3.5 5 3.5 Q7 3.5 7 5.8" stroke="#9c9c9c" stroke-width="0.7" fill="none"/><path d="M9 8 L5.5 8 M6.5 7 L5.5 8 L6.5 9" stroke="#bbb" stroke-width="0.6" fill="none"/></svg>
<div class="a" style="left:1008px;top:168.5px;width:128px;height:1px;background:#4b4b4b;"></div>
<div class="a" style="left:1021.5px;top:172.7px;width:7.7px;height:8.7px;background:#4a4a4a;"></div>
<div class="a" style="left:1030.2px;top:172.7px;width:28px;height:8.7px;background:#434343;"></div>
<div class="a" style="left:1059px;top:172.7px;width:7.5px;height:8.7px;background:#474747;"></div>
<svg class="a" style="left:1023px;top:173.1px" width="5" height="8" viewBox="0 0 5 8"><path d="M0.8 2.8 L2.5 1 L4.2 2.8 M0.8 5.2 L2.5 7 L4.2 5.2" stroke="#bdbdbd" stroke-width="0.8" fill="none"/></svg>
<div class="t" style="left:1031.5px;top:173.7px;font-size:6.5px;color:#dadada;">0 pt</div>
<svg class="a" style="left:1060.7px;top:175.89999999999998px" width="4.5" height="3" viewBox="0 0 4.5 3"><path d="M0.5 0.6 L2.25 2.3 L4 0.6" stroke="#c4c4c4" stroke-width="1" fill="none"/></svg>
<div class="a" style="left:1087.5px;top:172.7px;width:7.7px;height:8.7px;background:#4a4a4a;"></div>
<div class="a" style="left:1096px;top:172.7px;width:27.2px;height:8.7px;background:#434343;"></div>
<div class="a" style="left:1124px;top:172.7px;width:8px;height:8.7px;background:#474747;"></div>
<svg class="a" style="left:1089px;top:173.1px" width="5" height="8" viewBox="0 0 5 8"><path d="M0.8 2.8 L2.5 1 L4.2 2.8 M0.8 5.2 L2.5 7 L4.2 5.2" stroke="#bdbdbd" stroke-width="0.8" fill="none"/></svg>
<div class="t" style="left:1097px;top:173.7px;font-size:6.5px;color:#dadada;">0°</div>
<svg class="a" style="left:1125.9px;top:175.89999999999998px" width="4.5" height="3" viewBox="0 0 4.5 3"><path d="M0.5 0.6 L2.25 2.3 L4 0.6" stroke="#c4c4c4" stroke-width="1" fill="none"/></svg>
<svg class="a" style="left:1010px;top:173px" width="9" height="9" viewBox="0 0 9 9"><text x="0" y="7.5" font-family="Liberation Sans" font-size="6.5" fill="#a0a0a0">A</text><path d="M6.5 1 L6.5 8.5 M5.5 2 L6.5 1 L7.5 2 M5.5 7.5 L6.5 8.5 L7.5 7.5" stroke="#a0a0a0" stroke-width="0.6" fill="none"/></svg>
<svg class="a" style="left:1076px;top:172.5px" width="10" height="10" viewBox="0 0 10 10"><circle cx="5" cy="5" r="4" fill="none" stroke="#bbb" stroke-width="0.7"/><text x="2.5" y="7.5" font-family="Liberation Serif" font-weight="bold" font-size="6.5" fill="#bbb">T</text></svg>
<div class="a" style="left:1008px;top:185px;width:128px;height:1px;background:#4b4b4b;"></div>
<div class="t" style="left:1012px;top:188.1px;font-size:7.5px;color:#c2c2c2;font-family:Liberation Serif;font-weight:bold">TT</div>
<div class="t" style="left:1027px;top:188.1px;font-size:7.5px;color:#c2c2c2;font-family:Liberation Serif;font-weight:bold">Tr</div>
<div class="t" style="left:1061px;top:188.1px;font-size:7.5px;color:#c2c2c2;font-family:Liberation Serif;font-weight:bold">T</div>
<div class="t" style="left:1066.5px;top:187.1px;font-size:5.0px;color:#c2c2c2;">¹</div>
<div class="t" style="left:1075px;top:188.1px;font-size:7.5px;color:#c2c2c2;font-family:Liberation Serif;font-weight:bold">T</div>
<div class="t" style="left:1080px;top:190.6px;font-size:5.0px;color:#c2c2c2;">₁</div>
<div class="t" style="left:1110px;top:188.1px;font-size:7.5px;color:#c2c2c2;font-family:Liberation Serif;font-weight:bold">T</div>
<div class="a" style="left:1110px;top:196px;width:6px;height:0.8px;background:#c2c2c2;"></div>
<div class="t" style="left:1124px;top:188.1px;font-size:7.5px;color:#c2c2c2;font-family:Liberation Serif;font-weight:bold">T</div>
<div class="a" style="left:1123.5px;top:191.5px;width:7px;height:0.8px;background:#c2c2c2;"></div>
<div class="a" style="left:1011px;top:202px;width:52.5px;height:8.8px;background:#434343;"></div>
<div class="t" style="left:1013px;top:202.9px;font-size:5.66px;color:#e0e0e0;font-weight:bold">英語：米国</div>
<svg class="a" style="left:1057.4px;top:205.7px" width="4.5" height="3" viewBox="0 0 4.5 3"><path d="M0.5 0.6 L2.25 2.3 L4 0.6" stroke="#c4c4c4" stroke-width="1" fill="none"/></svg>
<svg class="a" style="left:1068px;top:202px" width="9" height="9" viewBox="0 0 9 9"><text x="0.2" y="5" font-family="Liberation Sans" font-size="5" fill="#a8a8a8">a</text><text x="3.4" y="8.6" font-family="Liberation Sans" font-size="6.5" fill="#a8a8a8">a</text></svg>
<div class="a" style="left:1079px;top:202px;width:53px;height:8.8px;background:#434343;"></div>
<div class="t" style="left:1082px;top:202.9px;font-size:5.66px;color:#e0e0e0;font-weight:bold">シャープ</div>
<svg class="a" style="left:1125.9px;top:205.7px" width="4.5" height="3" viewBox="0 0 4.5 3"><path d="M0.5 0.6 L2.25 2.3 L4 0.6" stroke="#c4c4c4" stroke-width="1" fill="none"/></svg>
<div class="a" style="left:1008px;top:213px;width:128px;height:2px;background:#424242;"></div>
<div class="a" style="left:1008px;top:215px;width:128px;height:14px;background:#424242;"></div>
<div class="a" style="left:1008px;top:215px;width:41px;height:13.6px;background:#535353;"></div>
<div class="a" style="left:1049px;top:215px;width:19.5px;height:13.6px;background:#474747;"></div>
<div class="a" style="left:1068.5px;top:215px;width:1px;height:13.6px;background:#3e3e3e;"></div>
<div class="t" style="left:1012px;top:218.6px;font-size:5.66px;color:#e8e8e8;">アピアランス</div>
<div class="a" style="left:1053.5px;top:219.5px;width:6px;height:5px;background:#777;"></div>
<svg class="a" style="left:1127.5px;top:220.3px" width="5" height="4.5" viewBox="0 0 5 4.5"><rect x="0" y="0" width="5" height="0.9" fill="#7c7c7c"/><rect x="0" y="1.7" width="5" height="0.9" fill="#7c7c7c"/><rect x="0" y="3.4" width="5" height="0.9" fill="#7c7c7c"/></svg>
<div class="a" style="left:1009.5px;top:232px;width:124px;height:155px;background:transparent;border:1px solid #4b4b4b;border-bottom:none"></div>
<div class="a" style="left:1012px;top:234px;width:9.5px;height:9.5px;background:#fff;"></div>
<div class="t" style="left:1035.5px;top:235.8px;font-size:5.66px;color:#e8e8e8;">選択なし</div>
<div class="a" style="left:1010.5px;top:245.3px;width:122.5px;height:12.1px;background:#4d6a8c;"></div>
<div class="a" style="left:1021.5px;top:245.3px;width:0.8px;height:38px;background:#383838;"></div>
<svg class="a" style="left:1012px;top:248px" width="9" height="6" viewBox="0 0 9 6"><ellipse cx="4.5" cy="3" rx="4" ry="2.4" fill="none" stroke="#c8d4e0" stroke-width="0.7"/><circle cx="4.5" cy="3" r="1.2" fill="#c8d4e0"/></svg>
<svg class="a" style="left:1026px;top:248px" width="3" height="6" viewBox="0 0 3 6"><path d="M0.5 0.5 L2.5 3 L0.5 5.5" stroke="#d0d0d0" stroke-width="0.7" fill="none"/></svg>
<div class="t" style="left:1035.5px;top:248.2px;font-size:5.66px;color:#eaeaea;text-decoration:underline dotted #999">線：</div>
<div class="a" style="left:1068px;top:247px;width:10px;height:10px;background:#fff;border:0.5px solid #888"></div>
<svg class="a" style="left:1068px;top:247px" width="10" height="10" viewBox="0 0 10 10"><path d="M9.5 0.5 L0.5 9.5" stroke="#d02020" stroke-width="1.2"/></svg>
<div class="a" style="left:1078.5px;top:247px;width:7px;height:10px;background:#474747;"></div>
<svg class="a" style="left:1079.9px;top:250.7px" width="4.5" height="3" viewBox="0 0 4.5 3"><path d="M0.5 0.6 L2.25 2.3 L4 0.6" stroke="#c4c4c4" stroke-width="1" fill="none"/></svg>
<div class="a" style="left:1088.6px;top:247px;width:8.6px;height:10px;background:#474747;"></div>
<svg class="a" style="left:1090.4px;top:248px" width="5" height="8" viewBox="0 0 5 8"><path d="M0.8 2.8 L2.5 1 L4.2 2.8 M0.8 5.2 L2.5 7 L4.2 5.2" stroke="#bdbdbd" stroke-width="0.8" fill="none"/></svg>
<div class="a" style="left:1097.8px;top:247px;width:18.4px;height:10px;background:#444;"></div>
<div class="a" style="left:1116.8px;top:247px;width:8.7px;height:10px;background:#474747;"></div>
<svg class="a" style="left:1119.0px;top:250.7px" width="4.5" height="3" viewBox="0 0 4.5 3"><path d="M0.5 0.6 L2.25 2.3 L4 0.6" stroke="#c4c4c4" stroke-width="1" fill="none"/></svg>
<svg class="a" style="left:1012px;top:261px" width="9" height="6" viewBox="0 0 9 6"><ellipse cx="4.5" cy="3" rx="4" ry="2.4" fill="none" stroke="#bbb" stroke-width="0.7"/><circle cx="4.5" cy="3" r="1.2" fill="#bbb"/></svg>
<svg class="a" style="left:1026px;top:261px" width="3" height="6" viewBox="0 0 3 6"><path d="M0.5 0.5 L2.5 3 L0.5 5.5" stroke="#c8c8c8" stroke-width="0.7" fill="none"/></svg>
<div class="t" style="left:1035.5px;top:260.8px;font-size:5.66px;color:#dcdcdc;text-decoration:underline dotted #888">塗り：</div>
<div class="a" style="left:1069px;top:259.5px;width:8.5px;height:8.5px;background:#fff;border:1.5px solid #333"></div>
<div class="a" style="left:1010.5px;top:270px;width:122.5px;height:0.8px;background:#4b4b4b;"></div>
<svg class="a" style="left:1012px;top:273.5px" width="9" height="6" viewBox="0 0 9 6"><ellipse cx="4.5" cy="3" rx="4" ry="2.4" fill="none" stroke="#707070" stroke-width="0.7"/><circle cx="4.5" cy="3" r="1.2" fill="#707070"/></svg>
<div class="t" style="left:1035.5px;top:272.8px;font-size:5.66px;color:#dcdcdc;text-decoration:underline dotted #888">不透明度：</div>
<div class="t" style="left:1077px;top:272.8px;font-size:5.66px;color:#c8c8c8;">初期設定</div>
<div class="a" style="left:1010.5px;top:283px;width:122.5px;height:0.8px;background:#4b4b4b;"></div>
<div class="a" style="left:1008px;top:377px;width:128px;height:0.8px;background:#4b4b4b;"></div>
<svg class="a" style="left:1012px;top:380px" width="120" height="8" viewBox="0 0 120 8"><rect x="0.8" y="0.8" width="5" height="5" fill="none" stroke="#cfcfcf" stroke-width="1"/><rect x="13.5" y="0.8" width="5.4" height="5.4" fill="#aaa"/><rect x="15" y="2.3" width="2.4" height="2.4" fill="#777"/><text x="26" y="6.5" font-family="Liberation Serif" font-style="italic" font-size="7" fill="#aaa">fx.</text><circle cx="81.5" cy="3.6" r="2.8" fill="none" stroke="#ccc" stroke-width="0.8"/><path d="M79.5 5.5 L83.5 1.5" stroke="#ccc" stroke-width="0.7"/><path d="M91 0.6 L96 0.6 L96 6.6 L91 6.6 Z" fill="#ccc"/><rect x="90" y="2" width="3" height="2" fill="#555"/><path d="M102.5 1.5 L107.5 1.5 L107 7 L103 7 Z" fill="#888"/><rect x="102" y="0.3" width="6" height="1" fill="#888"/></svg>
<div class="a" style="left:1008px;top:388px;width:128px;height:2px;background:#3e3e3e;"></div>
<div class="a" style="left:1008px;top:390px;width:128px;height:13px;background:#424242;"></div>
<div class="a" style="left:1008px;top:390px;width:30px;height:12.8px;background:#535353;"></div>
<div class="t" style="left:1012px;top:393.1px;font-size:5.66px;color:#e8e8e8;">レイヤー</div>
<svg class="a" style="left:1127.5px;top:394.8px" width="5" height="4.5" viewBox="0 0 5 4.5"><rect x="0" y="0" width="5" height="0.9" fill="#7c7c7c"/><rect x="0" y="1.7" width="5" height="0.9" fill="#7c7c7c"/><rect x="0" y="3.4" width="5" height="0.9" fill="#7c7c7c"/></svg>
<div class="a" style="left:1010.5px;top:406.6px;width:122.5px;height:10.6px;background:#4d6a8c;"></div>
<svg class="a" style="left:1012px;top:409px" width="9" height="6" viewBox="0 0 9 6"><ellipse cx="4.5" cy="3" rx="4" ry="2.4" fill="none" stroke="#c8d4e0" stroke-width="0.7"/><circle cx="4.5" cy="3" r="1.2" fill="#c8d4e0"/></svg>
<div class="a" style="left:1032px;top:407.5px;width:1.2px;height:8.5px;background:#3d7bd6;"></div>
<svg class="a" style="left:1038px;top:409px" width="3" height="6" viewBox="0 0 3 6"><path d="M0.5 0.5 L2.5 3 L0.5 5.5" stroke="#d0d0d0" stroke-width="0.7" fill="none"/></svg>
<div class="a" style="left:1046px;top:407.6px;width:9px;height:8.6px;background:#fff;border:0.6px solid #222"></div>
<div class="a" style="left:1048px;top:411px;width:2.5px;height:0.8px;background:#333;"></div>
<div class="t" style="left:1059px;top:408.8px;font-size:6.5px;color:#eaeaea;">レイヤー 1</div>
<svg class="a" style="left:1117px;top:409px" width="6" height="6" viewBox="0 0 6 6"><circle cx="3" cy="3" r="2" fill="none" stroke="#c0c8d0" stroke-width="0.7"/></svg>
<svg class="a" style="left:1129px;top:406.6px" width="4" height="4" viewBox="0 0 4 4"><path d="M0 0 L4 0 L4 4 Z" fill="#e8e8e8"/></svg>
<div class="a" style="left:1010.4px;top:405px;width:122.2px;height:293.5px;background:transparent;border:1px solid #4b4b4b;border-top:none"></div>
<div class="t" style="left:1011px;top:700.1px;font-size:6.5px;color:#d0d0d0;">1 レイヤー</div>
<svg class="a" style="left:1050px;top:700px" width="86" height="8" viewBox="0 0 86 8"><path d="M1 2 L1 7 L6 7 L6 5 M3.5 4.5 L6.5 1.5 M4.5 1.5 L6.5 1.5 L6.5 3.5" stroke="#bbb" stroke-width="0.7" fill="none"/><circle cx="16" cy="3.5" r="2" fill="none" stroke="#666" stroke-width="0.7"/><rect x="26.5" y="1" width="5.5" height="5.5" fill="#bbb"/><rect x="28" y="2.5" width="2.5" height="2.5" fill="#555"/><path d="M37 1 L37 6.5 L44 6.5 M39 3 L43 3 L43 6" stroke="#bbb" stroke-width="0.8" fill="none"/><rect x="50" y="1" width="5.5" height="5.5" fill="#bbb"/><rect x="51" y="2" width="2" height="1.5" fill="#555"/><path d="M63 1.5 L67.5 1.5 L67 7 L63.5 7 Z" fill="#6e6e6e"/></svg><!-- /PANELS1 -->
<!-- PANELS2 --><div class="a" style="left:1137px;top:40px;width:140px;height:13.5px;background:#424242;"></div>
<div class="a" style="left:1137px;top:40px;width:40.5px;height:13.5px;background:#535353;"></div>
<div class="t" style="left:1141px;top:43.6px;font-size:5.22px;color:#e8e8e8;">ナビゲーター</div>
<svg class="a" style="left:1269.5px;top:45.3px" width="5" height="4.5" viewBox="0 0 5 4.5"><rect x="0" y="0" width="5" height="0.9" fill="#7c7c7c"/><rect x="0" y="1.7" width="5" height="0.9" fill="#7c7c7c"/><rect x="0" y="3.4" width="5" height="0.9" fill="#7c7c7c"/></svg>
<div class="a" style="left:1151.4px;top:53.5px;width:125.6px;height:105.5px;background:#fff;"></div>
<div class="a" style="left:1154.2px;top:72.2px;width:120.2px;height:68.2px;background:transparent;border:0.8px solid #7a7a7a"></div>
<svg class="a" style="left:1141px;top:164px" width="6" height="4" viewBox="0 0 6 4"><path d="M0.5 3.5 L3 1 L5.5 3.5 Z" fill="#bbb"/></svg>
<div class="a" style="left:1151.8px;top:162px;width:31.7px;height:9px;background:#434343;"></div>
<div class="t" style="left:1153.5px;top:163.1px;font-size:6.5px;color:#dadada;">100%</div>
<div class="a" style="left:1184.5px;top:162px;width:8px;height:9px;background:#474747;"></div>
<svg class="a" style="left:1186.4px;top:165.7px" width="4.5" height="3" viewBox="0 0 4.5 3"><path d="M0.5 0.6 L2.25 2.3 L4 0.6" stroke="#c4c4c4" stroke-width="1" fill="none"/></svg>
<svg class="a" style="left:1197px;top:163px" width="10" height="5" viewBox="0 0 10 5"><path d="M0.5 4.5 L3 1.5 L5 3.5 L6.5 1 L9.5 4.5 Z" fill="#bbb"/></svg>
<div class="a" style="left:1137px;top:172px;width:140px;height:1.5px;background:#4a4a4a;"></div>
<div class="a" style="left:1137px;top:173.5px;width:140px;height:13.5px;background:#424242;"></div>
<div class="a" style="left:1137px;top:173.5px;width:36px;height:13.5px;background:#535353;"></div>
<div class="a" style="left:1173px;top:173.5px;width:26px;height:13.5px;background:#474747;"></div>
<div class="a" style="left:1199px;top:173.5px;width:30.5px;height:13.5px;background:#474747;"></div>
<div class="a" style="left:1198.5px;top:173.5px;width:1px;height:13.5px;background:#3e3e3e;"></div>
<div class="a" style="left:1229.5px;top:173.5px;width:1px;height:13.5px;background:#3e3e3e;"></div>
<div class="t" style="left:1141px;top:177.1px;font-size:5.22px;color:#e8e8e8;">スウォッチ</div>
<div class="t" style="left:1178px;top:177.1px;font-size:5.22px;color:#a8a8a8;">ブラシ</div>
<div class="t" style="left:1204px;top:177.1px;font-size:5.22px;color:#a8a8a8;">シンボル</div>
<svg class="a" style="left:1269.5px;top:178.8px" width="5" height="4.5" viewBox="0 0 5 4.5"><rect x="0" y="0" width="5" height="0.9" fill="#7c7c7c"/><rect x="0" y="1.7" width="5" height="0.9" fill="#7c7c7c"/><rect x="0" y="3.4" width="5" height="0.9" fill="#7c7c7c"/></svg>
<div class="a" style="left:1140px;top:191px;width:9px;height:9px;background:#fff;"></div>
<div class="a" style="left:1144.6px;top:195.5px;width:9.4px;height:9.4px;background:#fff;border:0.6px solid #999"></div>
<div class="a" style="left:1146.8px;top:197.8px;width:5px;height:5px;background:#555;"></div>
<svg class="a" style="left:1144.6px;top:195.5px" width="10" height="10" viewBox="0 0 10 10"><path d="M9.4 0.4 L0.6 9.2" stroke="#d02020" stroke-width="1.2"/></svg>
<svg class="a" style="left:1253px;top:192px" width="7" height="9" viewBox="0 0 7 9"><g fill="#a0a0a0"><rect x="0" y="0.5" width="7" height="0.7"/><rect x="0" y="2.3" width="7" height="0.7"/><rect x="0" y="4.1" width="7" height="0.7"/><rect x="0" y="5.9" width="7" height="0.7"/><rect x="0" y="7.7" width="7" height="0.7"/></g></svg>
<div class="a" style="left:1262.5px;top:190.5px;width:11.5px;height:11px;background:#353535;"></div>
<svg class="a" style="left:1264px;top:192px" width="8" height="8" viewBox="0 0 8 8"><g fill="#e0e0e0"><rect x="0" y="0" width="2" height="2"/><rect x="3" y="0" width="2" height="2"/><rect x="6" y="0" width="2" height="2"/><rect x="0" y="3" width="2" height="2"/><rect x="3" y="3" width="2" height="2"/><rect x="6" y="3" width="2" height="2"/><rect x="0" y="6" width="2" height="2"/><rect x="3" y="6" width="2" height="2"/><rect x="6" y="6" width="2" height="2"/></g></svg>
<div class="a" style="left:1139.5px;top:206px;width:135px;height:158px;background:transparent;border:1px solid #4d4d4d"></div>
<div class="a" style="left:1140.0px;top:207.9px;width:6.6px;height:6.8px;background:#fff;"></div>
<svg class="a" style="left:1140.0px;top:207.9px" width="7" height="7" viewBox="0 0 7 7"><path d="M6.6 0.2 L0.2 6.6" stroke="#d02020" stroke-width="1"/></svg>
<div class="a" style="left:1147.06px;top:207.9px;width:6.6px;height:6.8px;background:#e8e8e8;"></div>
<svg class="a" style="left:1147.06px;top:207.9px" width="7" height="7" viewBox="0 0 7 7"><path d="M3.3 0 L3.3 7 M0 3.4 L7 3.4" stroke="#333" stroke-width="0.6"/><circle cx="3.3" cy="3.4" r="1.6" fill="none" stroke="#333" stroke-width="0.5"/></svg>
<div class="a" style="left:1154.12px;top:207.9px;width:6.6px;height:6.8px;background:#ffffff;"></div>
<div class="a" style="left:1161.18px;top:207.9px;width:6.6px;height:6.8px;background:#000000;"></div>
<div class="a" style="left:1168.24px;top:207.9px;width:6.6px;height:6.8px;background:#ff0000;"></div>
<div class="a" style="left:1175.3px;top:207.9px;width:6.6px;height:6.8px;background:#ffff00;"></div>
<div class="a" style="left:1182.36px;top:207.9px;width:6.6px;height:6.8px;background:#00ff00;"></div>
<div class="a" style="left:1189.42px;top:207.9px;width:6.6px;height:6.8px;background:#00ffff;"></div>
<div class="a" style="left:1196.48px;top:207.9px;width:6.6px;height:6.8px;background:#0000ff;"></div>
<div class="a" style="left:1203.54px;top:207.9px;width:6.6px;height:6.8px;background:#ff00ff;"></div>
<div class="a" style="left:1210.6px;top:207.9px;width:6.6px;height:6.8px;background:#c1272d;"></div>
<div class="a" style="left:1217.66px;top:207.9px;width:6.6px;height:6.8px;background:#ed1c24;"></div>
<div class="a" style="left:1224.72px;top:207.9px;width:6.6px;height:6.8px;background:#f15a24;"></div>
<div class="a" style="left:1231.78px;top:207.9px;width:6.6px;height:6.8px;background:#f7931e;"></div>
<div class="a" style="left:1238.84px;top:207.9px;width:6.6px;height:6.8px;background:#fbb03b;"></div>
<div class="a" style="left:1245.9px;top:207.9px;width:6.6px;height:6.8px;background:#fcee21;"></div>
<div class="a" style="left:1252.96px;top:207.9px;width:6.6px;height:6.8px;background:#d9e021;"></div>
<div class="a" style="left:1260.02px;top:207.9px;width:6.6px;height:6.8px;background:#8cc63f;"></div>
<div class="a" style="left:1140.0px;top:215.2px;width:6.6px;height:6.8px;background:#39b54a;"></div>
<div class="a" style="left:1147.06px;top:215.2px;width:6.6px;height:6.8px;background:#009245;"></div>
<div class="a" style="left:1154.12px;top:215.2px;width:6.6px;height:6.8px;background:#006837;"></div>
<div class="a" style="left:1161.18px;top:215.2px;width:6.6px;height:6.8px;background:#22b573;"></div>
<div class="a" style="left:1168.24px;top:215.2px;width:6.6px;height:6.8px;background:#00a99d;"></div>
<div class="a" style="left:1175.3px;top:215.2px;width:6.6px;height:6.8px;background:#29abe2;"></div>
<div class="a" style="left:1182.36px;top:215.2px;width:6.6px;height:6.8px;background:#0071bc;"></div>
<div class="a" style="left:1189.42px;top:215.2px;width:6.6px;height:6.8px;background:#2e3192;"></div>
<div class="a" style="left:1196.48px;top:215.2px;width:6.6px;height:6.8px;background:#1b1464;"></div>
<div class="a" style="left:1203.54px;top:215.2px;width:6.6px;height:6.8px;background:#662d91;"></div>
<div class="a" style="left:1210.6px;top:215.2px;width:6.6px;height:6.8px;background:#93278f;"></div>
<div class="a" style="left:1217.66px;top:215.2px;width:6.6px;height:6.8px;background:#9e005d;"></div>
<div class="a" style="left:1224.72px;top:215.2px;width:6.6px;height:6.8px;background:#d4145a;"></div>
<div class="a" style="left:1231.78px;top:215.2px;width:6.6px;height:6.8px;background:#ed1e79;"></div>
<div class="a" style="left:1238.84px;top:215.2px;width:6.6px;height:6.8px;background:#c7b299;"></div>
<div class="a" style="left:1245.9px;top:215.2px;width:6.6px;height:6.8px;background:#998675;"></div>
<div class="a" style="left:1252.96px;top:215.2px;width:6.6px;height:6.8px;background:#736357;"></div>
<div class="a" style="left:1260.02px;top:215.2px;width:6.6px;height:6.8px;background:#534741;"></div>
<div class="a" style="left:1140.0px;top:222.5px;width:6.6px;height:6.8px;background:#c69c6d;"></div>
<div class="a" style="left:1147.06px;top:222.5px;width:6.6px;height:6.8px;background:#a67c52;"></div>
<div class="a" style="left:1154.12px;top:222.5px;width:6.6px;height:6.8px;background:#8c6239;"></div>
<div class="a" style="left:1161.18px;top:222.5px;width:6.6px;height:6.8px;background:#754c24;"></div>
<div class="a" style="left:1168.24px;top:222.5px;width:6.6px;height:6.8px;background:#603813;"></div>
<div class="a" style="left:1175.3px;top:222.5px;width:6.6px;height:6.8px;background:#42210b;"></div>
<div class="a" style="left:1182.36px;top:222.5px;width:6.6px;height:6.8px;background:linear-gradient(90deg,#fff,#000);"></div>
<div class="a" style="left:1189.42px;top:222.5px;width:6.6px;height:6.8px;background:linear-gradient(90deg,#fff,#1e73be);"></div>
<div class="a" style="left:1196.48px;top:222.5px;width:6.6px;height:6.8px;background:linear-gradient(90deg,#fff,#ec7ab0);"></div>
<div class="a" style="left:1203.54px;top:222.5px;width:6.6px;height:6.8px;background:radial-gradient(circle,#fdd776,#f7931e);"></div>
<div class="a" style="left:1210.6px;top:222.5px;width:6.6px;height:6.8px;background:repeating-linear-gradient(45deg,#e6dfcf 0 1.5px,#c9c0a8 1.5px 3px);"></div>
<div class="a" style="left:1217.66px;top:222.5px;width:6.6px;height:6.8px;background:repeating-linear-gradient(45deg,#3b7cc0 0 1.5px,#a6c8e8 1.5px 3px);"></div>
<div class="a" style="left:1224.72px;top:222.5px;width:6.6px;height:6.8px;background:repeating-linear-gradient(-45deg,#b9d6b6 0 1.5px,#e8eee0 1.5px 3px);"></div>
<svg class="a" style="left:1140.0px;top:230.5px" width="7" height="7" viewBox="0 0 7 7"><path d="M0.8 1.8 L3 1.8 L3.6 2.6 L6.4 2.6 L6.4 6 L0.8 6 Z" fill="#cfcfcf"/></svg>
<div class="a" style="left:1147.06px;top:230.5px;width:6.6px;height:6.8px;background:#000000;"></div>
<div class="a" style="left:1154.12px;top:230.5px;width:6.6px;height:6.8px;background:#1a1a1a;"></div>
<div class="a" style="left:1161.18px;top:230.5px;width:6.6px;height:6.8px;background:#333333;"></div>
<div class="a" style="left:1168.24px;top:230.5px;width:6.6px;height:6.8px;background:#4d4d4d;"></div>
<div class="a" style="left:1175.3px;top:230.5px;width:6.6px;height:6.8px;background:#666666;"></div>
<div class="a" style="left:1182.36px;top:230.5px;width:6.6px;height:6.8px;background:#808080;"></div>
<div class="a" style="left:1189.42px;top:230.5px;width:6.6px;height:6.8px;background:#999999;"></div>
<div class="a" style="left:1196.48px;top:230.5px;width:6.6px;height:6.8px;background:#b3b3b3;"></div>
<div class="a" style="left:1203.54px;top:230.5px;width:6.6px;height:6.8px;background:#cccccc;"></div>
<div class="a" style="left:1210.6px;top:230.5px;width:6.6px;height:6.8px;background:#e6e6e6;"></div>
<div class="a" style="left:1217.66px;top:230.5px;width:6.6px;height:6.8px;background:#f2f2f2;"></div>
<svg class="a" style="left:1140.0px;top:238.3px" width="7" height="7" viewBox="0 0 7 7"><path d="M0.8 1.8 L3 1.8 L3.6 2.6 L6.4 2.6 L6.4 6 L0.8 6 Z" fill="#cfcfcf"/></svg>
<div class="a" style="left:1147.06px;top:238.3px;width:6.6px;height:6.8px;background:#3fa9f5;"></div>
<div class="a" style="left:1154.12px;top:238.3px;width:6.6px;height:6.8px;background:#7ac943;"></div>
<div class="a" style="left:1161.18px;top:238.3px;width:6.6px;height:6.8px;background:#ff931e;"></div>
<div class="a" style="left:1168.24px;top:238.3px;width:6.6px;height:6.8px;background:#ff1d25;"></div>
<div class="a" style="left:1175.3px;top:238.3px;width:6.6px;height:6.8px;background:#ff7bac;"></div>
<div class="a" style="left:1182.36px;top:238.3px;width:6.6px;height:6.8px;background:#bdccd4;"></div>
<svg class="a" style="left:1141px;top:365px" width="136" height="9" viewBox="0 0 136 9"><path d="M1 1 L4 1 L4 8 L1 8 Z M4.5 2 L7 2 L7 8 L4.5 8 Z" fill="#bdbdbd"/><circle cx="9" cy="7.5" r="0.5" fill="#bbb"/><path d="M20 1.5 L16 4.5 L20 7.5" stroke="#bdbdbd" stroke-width="0.9" fill="none"/><path d="M26 7.5 Q26 5 28.5 5 Q29.5 2 32.5 3 Q35.5 2.5 36 5.5 Q37 5.5 37 7.5 Z" fill="#bdbdbd"/><rect x="64" y="1.2" width="6" height="6" fill="#bdbdbd"/><rect x="65.5" y="2.5" width="2.5" height="2.5" fill="#555"/><circle cx="71.5" cy="7.5" r="0.5" fill="#bbb"/><rect x="77.5" y="1.5" width="5.5" height="6" fill="none" stroke="#6a6a6a" stroke-width="0.7"/><path d="M90 2 L93 2 L93.6 3 L97 3 L97 8 L90 8 Z" fill="#c8c8c8"/><path d="M104 1.5 L109 1.5 L109 7.5 L104 7.5 Z" fill="#6a6a6a"/><path d="M117 2 L122 2 L121.5 8 L117.5 8 Z" fill="#6a6a6a"/></svg>
<div class="a" style="left:1137px;top:374px;width:140px;height:2px;background:#424242;"></div>
<div class="a" style="left:1137px;top:376px;width:140px;height:13px;background:#424242;"></div>
<div class="a" style="left:1137px;top:376px;width:28px;height:13px;background:#535353;"></div>
<svg class="a" style="left:1139px;top:380px" width="3" height="6" viewBox="0 0 3 6"><path d="M0.3 2 L1.5 0.6 L2.7 2 M0.3 4 L1.5 5.4 L2.7 4" stroke="#888" stroke-width="0.5" fill="none"/></svg>
<div class="t" style="left:1144px;top:379.6px;font-size:5.22px;color:#e8e8e8;">カラー</div>
<svg class="a" style="left:1269.5px;top:380.8px" width="5" height="4.5" viewBox="0 0 5 4.5"><rect x="0" y="0" width="5" height="0.9" fill="#7c7c7c"/><rect x="0" y="1.7" width="5" height="0.9" fill="#7c7c7c"/><rect x="0" y="3.4" width="5" height="0.9" fill="#7c7c7c"/></svg>
<svg class="a" style="left:1139px;top:391.5px" width="8" height="8" viewBox="0 0 8 8"><rect x="0.5" y="0.5" width="4" height="4" fill="#fff" stroke="#333" stroke-width="0.5"/><rect x="3" y="3" width="4" height="4" fill="#111" stroke="#ccc" stroke-width="0.5"/></svg>
<svg class="a" style="left:1149.5px;top:392px" width="7" height="7" viewBox="0 0 7 7"><path d="M1.5 2.5 L4 2.5 Q5.5 2.5 5.5 4 L5.5 5.5" stroke="#cfcfcf" stroke-width="0.8" fill="none"/><path d="M0.5 2.5 L2 1 L2 4 Z M4 5 L7 5 L5.5 6.8 Z" fill="#cfcfcf"/></svg>
<div class="a" style="left:1140px;top:402px;width:9px;height:9px;background:#fff;"></div>
<div class="a" style="left:1144.6px;top:406.3px;width:9.4px;height:9.4px;background:#fff;border:0.6px solid #999"></div>
<div class="a" style="left:1146.8px;top:408.6px;width:5px;height:5px;background:#555;"></div>
<svg class="a" style="left:1144.6px;top:406.3px" width="10" height="10" viewBox="0 0 10 10"><path d="M9.4 0.4 L0.6 9.2" stroke="#d02020" stroke-width="1.2"/></svg>
<div class="t" style="left:1162px;top:395.2px;font-size:6.8px;color:#a0a0a0;">R</div>
<div class="a" style="left:1172px;top:397.8px;width:57px;height:2.2px;background:transparent;border:0.7px solid #4c4c4c"></div>
<div class="a" style="left:1233px;top:394.3px;width:16.5px;height:9px;background:#4a4a4a;"></div>
<div class="t" style="left:1162px;top:411.8px;font-size:6.8px;color:#a0a0a0;">G</div>
<div class="a" style="left:1172px;top:414.4px;width:57px;height:2.2px;background:transparent;border:0.7px solid #4c4c4c"></div>
<div class="a" style="left:1233px;top:410.9px;width:16.5px;height:9px;background:#4a4a4a;"></div>
<div class="t" style="left:1162px;top:428.4px;font-size:6.8px;color:#a0a0a0;">B</div>
<div class="a" style="left:1172px;top:431px;width:57px;height:2.2px;background:transparent;border:0.7px solid #4c4c4c"></div>
<div class="a" style="left:1233px;top:427.5px;width:16.5px;height:9px;background:#4a4a4a;"></div>
<svg class="a" style="left:1142px;top:436px" width="6" height="6" viewBox="0 0 6 6"><path d="M1 5.5 L1 1.5 L3 1.5 M0 2.5 L1 1 L2 2.5" stroke="#bbb" stroke-width="0.6" fill="none"/></svg>
<div class="a" style="left:1152px;top:435px;width:7px;height:7px;background:#000;border:0.6px solid #aaa"></div>
<div class="a" style="left:1140px;top:447px;width:6.5px;height:6.5px;background:#fff;"></div>
<svg class="a" style="left:1140px;top:447px" width="7" height="7" viewBox="0 0 7 7"><path d="M6.5 0.2 L0.2 6.5" stroke="#d02020" stroke-width="0.9"/></svg>
<div class="a" style="left:1146.5px;top:447px;width:6.5px;height:6.5px;background:#000;"></div>
<div class="a" style="left:1153px;top:447px;width:6.5px;height:6.5px;background:#fff;"></div>
<div class="t" style="left:1228px;top:446.6px;font-size:5.5px;color:#888;">#</div>
<div class="a" style="left:1233px;top:445px;width:35px;height:9px;background:#4a4a4a;"></div>
<div class="a" style="left:1140.5px;top:459px;width:127.5px;height:87.5px;background:linear-gradient(90deg,#f00 0%,#ff0 17%,#0f0 33%,#0ff 50%,#00f 67%,#f0f 83%,#f00 100%)"></div>
<div class="a" style="left:1140.5px;top:459px;width:127.5px;height:87.5px;background:linear-gradient(180deg,#fff 0%,rgba(255,255,255,0) 45%,rgba(0,0,0,0) 50%,#000 100%)"></div>
<div class="a" style="left:1137px;top:551px;width:140px;height:1px;background:#4a4a4a;"></div>
<div class="a" style="left:1137px;top:551.5px;width:140px;height:13.5px;background:#424242;"></div>
<div class="a" style="left:1137px;top:551.5px;width:47.5px;height:13.5px;background:#474747;"></div>
<div class="a" style="left:1185px;top:551.5px;width:22px;height:13.5px;background:#535353;"></div>
<div class="a" style="left:1184.5px;top:551.5px;width:0.8px;height:13.5px;background:#3e3e3e;"></div>
<div class="t" style="left:1141px;top:555.1px;font-size:5.22px;color:#a8a8a8;">グラデーション</div>
<svg class="a" style="left:1187px;top:556px" width="3" height="6" viewBox="0 0 3 6"><path d="M0.3 2 L1.5 0.6 L2.7 2 M0.3 4 L1.5 5.4 L2.7 4" stroke="#888" stroke-width="0.5" fill="none"/></svg>
<div class="t" style="left:1192px;top:555.1px;font-size:5.22px;color:#e8e8e8;">透明</div>
<svg class="a" style="left:1269.5px;top:556.3px" width="5" height="4.5" viewBox="0 0 5 4.5"><rect x="0" y="0" width="5" height="0.9" fill="#7c7c7c"/><rect x="0" y="1.7" width="5" height="0.9" fill="#7c7c7c"/><rect x="0" y="3.4" width="5" height="0.9" fill="#7c7c7c"/></svg>
<div class="a" style="left:1140px;top:568.4px;width:59.5px;height:9.5px;background:#434343;"></div>
<div class="t" style="left:1143px;top:569.6px;font-size:5.22px;color:#e0e0e0;">通常</div>
<svg class="a" style="left:1193.4px;top:572.0px" width="4.5" height="3" viewBox="0 0 4.5 3"><path d="M0.5 0.6 L2.25 2.3 L4 0.6" stroke="#c4c4c4" stroke-width="1" fill="none"/></svg>
<div class="t" style="left:1203px;top:569.6px;font-size:5.22px;color:#dcdcdc;">不透明度：</div>
<div class="a" style="left:1233px;top:568.4px;width:32px;height:9.5px;background:#434343;"></div>
<div class="t" style="left:1235px;top:569.6px;font-size:6.5px;color:#e0e0e0;">100%</div>
<div class="a" style="left:1265.5px;top:568.4px;width:6.5px;height:9.5px;background:#474747;"></div>
<svg class="a" style="left:1267px;top:570.5px" width="3" height="5" viewBox="0 0 3 5"><path d="M0.5 0.5 L2.5 2.5 L0.5 4.5" stroke="#ccc" stroke-width="0.8" fill="none"/></svg>
<div class="a" style="left:1137px;top:581px;width:140px;height:1.5px;background:#4a4a4a;"></div>
<div class="a" style="left:1137px;top:582.5px;width:140px;height:13.5px;background:#424242;"></div>
<div class="a" style="left:1137px;top:582.5px;width:20.5px;height:13.5px;background:#474747;"></div>
<div class="a" style="left:1157.5px;top:582.5px;width:21.5px;height:13.5px;background:#535353;"></div>
<div class="t" style="left:1141px;top:586.1px;font-size:5.22px;color:#a8a8a8;">整列</div>
<svg class="a" style="left:1159.5px;top:587px" width="3" height="6" viewBox="0 0 3 6"><path d="M0.3 2 L1.5 0.6 L2.7 2 M0.3 4 L1.5 5.4 L2.7 4" stroke="#888" stroke-width="0.5" fill="none"/></svg>
<div class="t" style="left:1164px;top:586.1px;font-size:5.22px;color:#e8e8e8;">変形</div>
<svg class="a" style="left:1269.5px;top:587.3px" width="5" height="4.5" viewBox="0 0 5 4.5"><rect x="0" y="0" width="5" height="0.9" fill="#7c7c7c"/><rect x="0" y="1.7" width="5" height="0.9" fill="#7c7c7c"/><rect x="0" y="3.4" width="5" height="0.9" fill="#7c7c7c"/></svg>
<svg class="a" style="left:1139px;top:605px" width="11" height="12" viewBox="0 0 11 12"><g fill="none" stroke="#8a8a8a" stroke-width="0.6"><circle cx="1.8" cy="2" r="1.3"/><circle cx="5.5" cy="2" r="1.3"/><circle cx="9.2" cy="2" r="1.3"/><circle cx="1.8" cy="6" r="1.3"/><circle cx="9.2" cy="6" r="1.3"/><circle cx="1.8" cy="10" r="1.3"/><circle cx="5.5" cy="10" r="1.3"/><circle cx="9.2" cy="10" r="1.3"/></g><circle cx="5.5" cy="6" r="1.4" fill="#eee"/></svg>
<div class="t" style="left:1153px;top:601.6px;font-size:6.3px;color:#7c7c7c;">X：</div>
<div class="a" style="left:1162px;top:600px;width:38px;height:9px;background:#4f4f4f;"></div>
<div class="t" style="left:1164px;top:601.6px;font-size:6.3px;color:#6c6c6c;">0 px</div>
<div class="t" style="left:1202px;top:601.6px;font-size:6.3px;color:#7c7c7c;">W：</div>
<div class="a" style="left:1213px;top:600px;width:38px;height:9px;background:#4f4f4f;"></div>
<div class="t" style="left:1215px;top:601.6px;font-size:6.3px;color:#6c6c6c;">0 px</div>
<div class="t" style="left:1153px;top:614.1px;font-size:6.3px;color:#7c7c7c;">Y：</div>
<div class="a" style="left:1162px;top:612.5px;width:38px;height:9px;background:#4f4f4f;"></div>
<div class="t" style="left:1164px;top:614.1px;font-size:6.3px;color:#6c6c6c;">0 px</div>
<div class="t" style="left:1202px;top:614.1px;font-size:6.3px;color:#7c7c7c;">H：</div>
<div class="a" style="left:1213px;top:612.5px;width:38px;height:9px;background:#4f4f4f;"></div>
<div class="t" style="left:1215px;top:614.1px;font-size:6.3px;color:#6c6c6c;">0 px</div>
<svg class="a" style="left:1256px;top:605px" width="8" height="10" viewBox="0 0 8 10"><path d="M2 1 Q0.5 2.5 2 4 L3 5 M6 9 Q7.5 7.5 6 6 L5 5 M1 1 L7 9" stroke="#aaa" stroke-width="0.8" fill="none"/></svg>
<svg class="a" style="left:1153px;top:626px" width="8" height="6" viewBox="0 0 8 6"><path d="M7 0.5 L0.5 5.5 L7.5 5.5" stroke="#7c7c7c" stroke-width="0.7" fill="none"/></svg>
<div class="a" style="left:1163px;top:625.5px;width:33px;height:9px;background:#4f4f4f;"></div>
<div class="t" style="left:1165px;top:627.1px;font-size:6.3px;color:#6c6c6c;">0°</div>
<svg class="a" style="left:1190.4px;top:628.7px" width="4.5" height="3" viewBox="0 0 4.5 3"><path d="M0.5 0.6 L2.25 2.3 L4 0.6" stroke="#6e6e6e" stroke-width="1" fill="none"/></svg>
<svg class="a" style="left:1199px;top:626px" width="7" height="6" viewBox="0 0 7 6"><path d="M2 5.5 L4 0.5 L7 0.5 L5 5.5 Z" fill="#8a8a8a"/></svg>
<div class="a" style="left:1208px;top:625.5px;width:33px;height:9px;background:#4f4f4f;"></div>
<div class="t" style="left:1210px;top:627.1px;font-size:6.3px;color:#6c6c6c;">0°</div>
<svg class="a" style="left:1235.4px;top:628.7px" width="4.5" height="3" viewBox="0 0 4.5 3"><path d="M0.5 0.6 L2.25 2.3 L4 0.6" stroke="#6e6e6e" stroke-width="1" fill="none"/></svg>
<div class="a" style="left:1137px;top:637.5px;width:140px;height:1.5px;background:#4a4a4a;"></div>
<div class="a" style="left:1137px;top:639px;width:140px;height:14px;background:#424242;"></div>
<div class="a" style="left:1137px;top:639px;width:52.5px;height:14px;background:#535353;"></div>
<div class="a" style="left:1189.5px;top:639px;width:63px;height:14px;background:#474747;"></div>
<div class="a" style="left:1252.5px;top:639px;width:0.8px;height:14px;background:#3e3e3e;"></div>
<div class="t" style="left:1141px;top:643.1px;font-size:5.22px;color:#e8e8e8;font-weight:bold">パスファインダー</div>
<div class="t" style="left:1193px;top:643.1px;font-size:5.22px;color:#a8a8a8;">グラフィックスタイル</div>
<svg class="a" style="left:1269.5px;top:644.3px" width="5" height="4.5" viewBox="0 0 5 4.5"><rect x="0" y="0" width="5" height="0.9" fill="#7c7c7c"/><rect x="0" y="1.7" width="5" height="0.9" fill="#7c7c7c"/><rect x="0" y="3.4" width="5" height="0.9" fill="#7c7c7c"/></svg>
<div class="t" style="left:1140px;top:657.1px;font-size:5.22px;color:#d0d0d0;">形状モード：</div>
<svg class="a" style="left:1141.8px;top:668.5999999999999px" width="9" height="9" viewBox="0 0 9 9"><rect x="0.5" y="0.5" width="5" height="5" fill="#d8d8d8"/><rect x="3" y="3" width="5" height="5" fill="#d8d8d8"/></svg>
<svg class="a" style="left:1159.3px;top:668.5999999999999px" width="9" height="9" viewBox="0 0 9 9"><rect x="0.5" y="0.5" width="5" height="5" fill="#d8d8d8"/><rect x="3" y="3" width="5" height="5" fill="#535353" stroke="#d8d8d8" stroke-width="0.7"/></svg>
<svg class="a" style="left:1176.8px;top:668.5999999999999px" width="9" height="9" viewBox="0 0 9 9"><rect x="0.5" y="0.5" width="5" height="5" fill="none" stroke="#d8d8d8" stroke-width="0.7"/><rect x="3" y="3" width="5" height="5" fill="none" stroke="#d8d8d8" stroke-width="0.7"/><rect x="3" y="3" width="2.5" height="2.5" fill="#e8e8e8"/></svg>
<svg class="a" style="left:1195.1px;top:668.5999999999999px" width="9" height="9" viewBox="0 0 9 9"><rect x="0.5" y="0.5" width="5" height="5" fill="#d8d8d8"/><rect x="3" y="3" width="5" height="5" fill="#d8d8d8"/><rect x="3" y="3" width="2.5" height="2.5" fill="#535353"/></svg>
<div class="a" style="left:1211px;top:668.3px;width:43px;height:9.2px;background:#595959;"></div>
<div class="t" style="left:1226px;top:669.6px;font-size:5.22px;color:#8a8a8a;">拡張</div>
<div class="t" style="left:1140px;top:683.1px;font-size:5.22px;color:#d0d0d0;">パスファインダー：</div>
<svg class="a" style="left:1143.8px;top:695.0px" width="9" height="9" viewBox="0 0 9 9"><rect x="0.5" y="0.5" width="5" height="5" fill="none" stroke="#d8d8d8" stroke-width="0.7"/><rect x="3" y="3" width="5" height="5" fill="#bbb" stroke="#d8d8d8" stroke-width="0.7"/></svg>
<svg class="a" style="left:1163.1px;top:695.0px" width="9" height="9" viewBox="0 0 9 9"><rect x="0.5" y="0.5" width="5" height="5" fill="#d8d8d8"/><rect x="3" y="3" width="5" height="5" fill="#c8c8c8" stroke="#535353" stroke-width="0.5"/></svg>
<svg class="a" style="left:1182.6px;top:695.0px" width="9" height="9" viewBox="0 0 9 9"><rect x="0.5" y="0.5" width="5" height="5" fill="#d8d8d8"/><rect x="3" y="3" width="5" height="5" fill="#d8d8d8"/></svg>
<svg class="a" style="left:1202.6px;top:695.0px" width="9" height="9" viewBox="0 0 9 9"><rect x="1.5" y="0.5" width="4.5" height="7" fill="none" stroke="#d8d8d8" stroke-width="0.7"/><rect x="2.5" y="3.5" width="2.5" height="2.5" fill="#e8e8e8"/></svg>
<svg class="a" style="left:1221.8px;top:695.0px" width="9" height="9" viewBox="0 0 9 9"><circle cx="3" cy="4" r="2.6" fill="none" stroke="#aaa" stroke-width="0.7"/><circle cx="5" cy="4" r="2.6" fill="none" stroke="#aaa" stroke-width="0.7"/></svg>
<svg class="a" style="left:1241.3px;top:695.0px" width="9" height="9" viewBox="0 0 9 9"><rect x="0.5" y="0.5" width="5" height="5" fill="#535353" stroke="#d8d8d8" stroke-width="0.7"/><rect x="3" y="3" width="5" height="5" fill="#d8d8d8"/></svg><!-- /PANELS2 -->
<!-- MISC --><svg class="a" style="left:40px;top:39px" width="5" height="5" viewBox="0 0 5 5"><path d="M0.8 0.8 L4.2 4.2 M4.2 0.8 L0.8 4.2" stroke="#bdbdbd" stroke-width="0.8"/></svg>
<div class="t" style="left:48.5px;top:38.1px;font-size:5.9px;color:#dedede;">名称未設定-1* @ 100% (RGB/GPU プレビュー)</div>
<div class="a" style="left:37px;top:700px;width:941px;height:8px;background:#4a4a4a;"></div>
<div class="a" style="left:38.8px;top:701px;width:23.5px;height:7px;background:#424242;"></div>
<div class="t" style="left:40px;top:701.6px;font-size:6.0px;color:#cfcfcf;">100%</div>
<div class="a" style="left:63.5px;top:701px;width:7.5px;height:7px;background:#474747;"></div>
<svg class="a" style="left:65.2px;top:703.7px" width="4.5" height="3" viewBox="0 0 4.5 3"><path d="M0.5 0.6 L2.25 2.3 L4 0.6" stroke="#c4c4c4" stroke-width="1" fill="none"/></svg>
<svg class="a" style="left:76px;top:702px" width="16" height="5" viewBox="0 0 16 5"><path d="M0.8 0.5 L0.8 4.5 M4.5 0.5 L2 2.5 L4.5 4.5 Z M12 0.5 L9.5 2.5 L12 4.5 Z" stroke="#666" stroke-width="0.6" fill="#666"/></svg>
<div class="a" style="left:94px;top:701px;width:18px;height:7px;background:#424242;"></div>
<div class="t" style="left:96px;top:701.6px;font-size:6.0px;color:#cfcfcf;">1</div>
<div class="a" style="left:113.5px;top:701px;width:7.5px;height:7px;background:#474747;"></div>
<svg class="a" style="left:115.2px;top:703.7px" width="4.5" height="3" viewBox="0 0 4.5 3"><path d="M0.5 0.6 L2.25 2.3 L4 0.6" stroke="#c4c4c4" stroke-width="1" fill="none"/></svg>
<svg class="a" style="left:126px;top:702px" width="16" height="5" viewBox="0 0 16 5"><path d="M1.5 0.5 L4 2.5 L1.5 4.5 Z M9 0.5 L11.5 2.5 L9 4.5 Z M13.5 0.5 L13.5 4.5" stroke="#666" stroke-width="0.6" fill="#666"/></svg>
<div class="a" style="left:142px;top:700.5px;width:0.8px;height:7.5px;background:#3e3e3e;"></div>
<div class="t" style="left:156px;top:701.4px;font-size:4.61px;color:#c8c8c8;">ダイレクト選択ツールを切り換え</div>
<svg class="a" style="left:245px;top:702px" width="5" height="5" viewBox="0 0 5 5"><path d="M0.8 0.5 L4.2 2.5 L0.8 4.5 Z" fill="#d0d0d0"/></svg>
<svg class="a" style="left:255px;top:702px" width="4" height="5" viewBox="0 0 4 5"><path d="M3 0.5 L1 2.5 L3 4.5" stroke="#999" stroke-width="0.6" fill="none"/></svg>
<div class="a" style="left:260px;top:703.5px;width:718px;height:1px;background:#444;"></div>
<div class="a" style="left:617px;top:702px;width:8px;height:4px;background:#5a5a5a;border-radius:2px"></div>
<svg class="a" style="left:969px;top:702px" width="4" height="5" viewBox="0 0 4 5"><path d="M1 0.5 L3 2.5 L1 4.5" stroke="#888" stroke-width="0.6" fill="none"/></svg><!-- /MISC -->
</body></html>
